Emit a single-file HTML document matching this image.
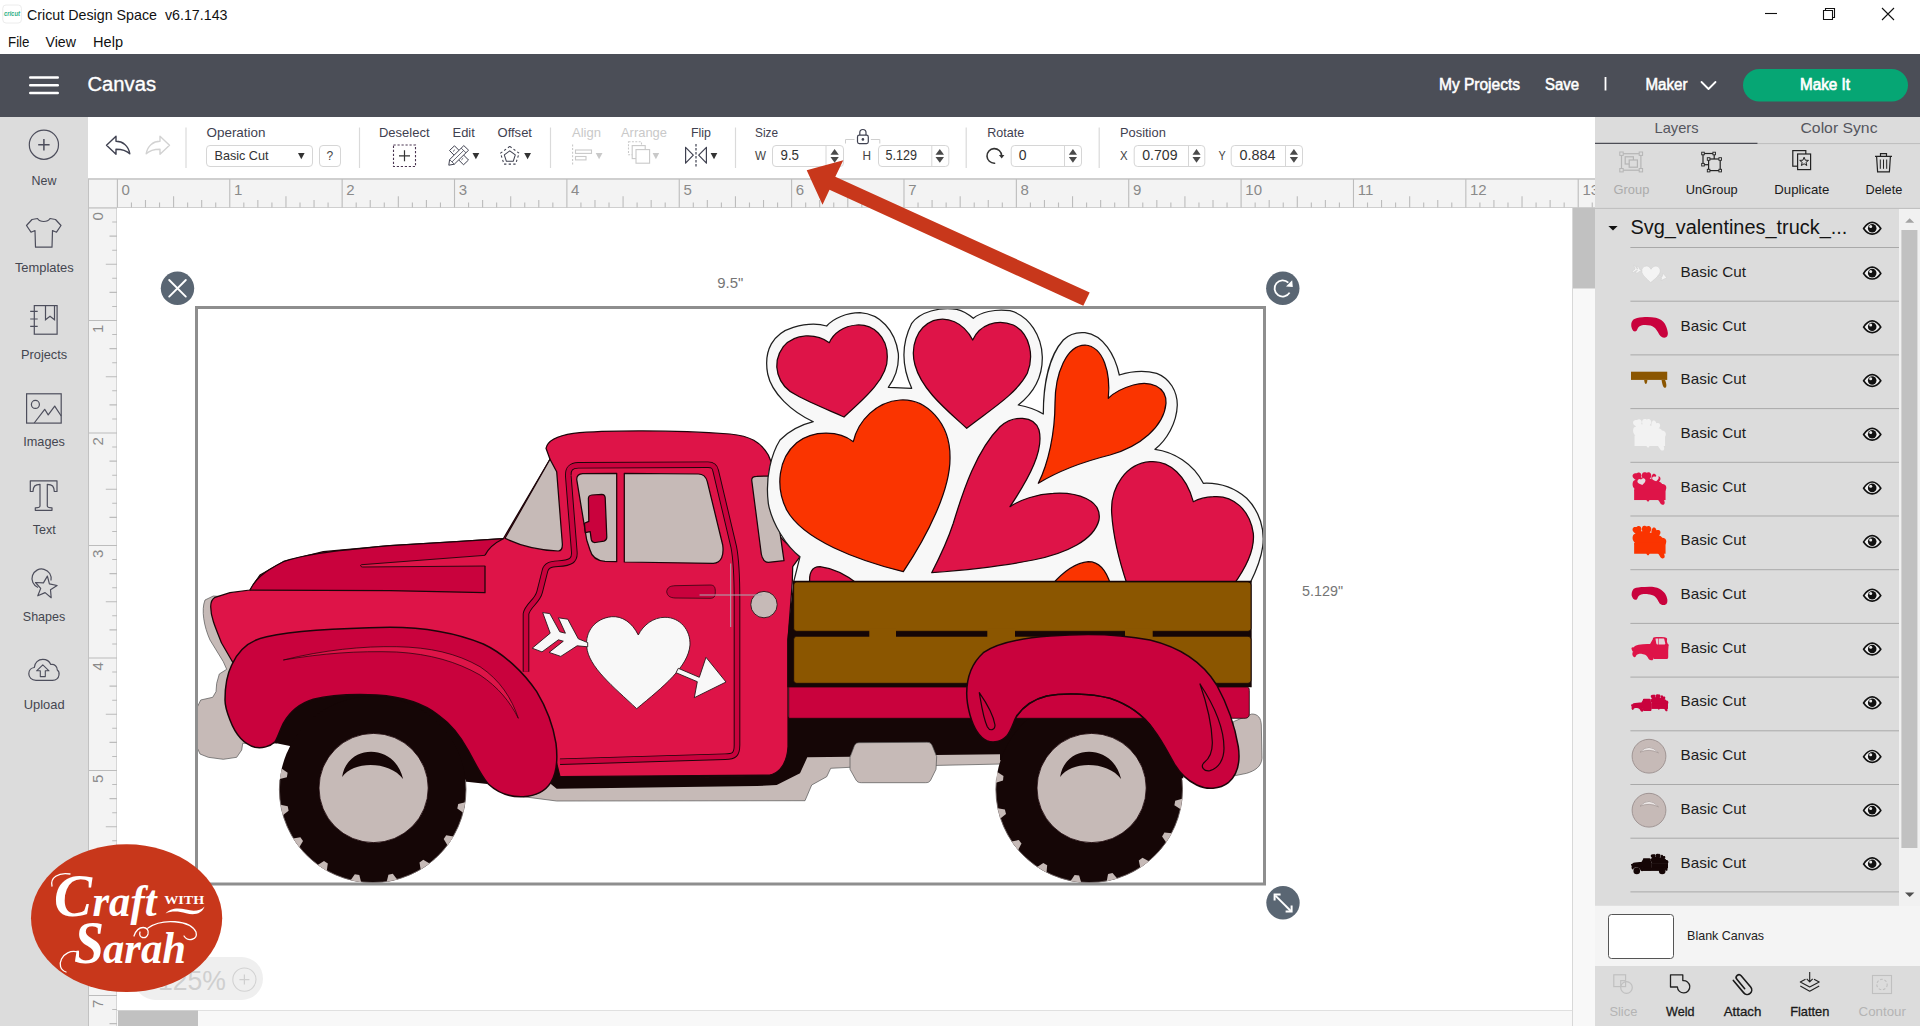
<!DOCTYPE html>
<html>
<head>
<meta charset="utf-8">
<title>Cricut Design Space</title>
<style>
*{box-sizing:border-box;margin:0;padding:0}
html,body{width:1920px;height:1026px;overflow:hidden;background:#fff;font-family:"Liberation Sans",sans-serif;color:#333}
.abs{position:absolute}
#titlebar{left:0;top:0;width:1920px;height:28px;background:#fff}
#menubar{left:0;top:28px;width:1920px;height:26px;background:#fff}
#header{left:0;top:54px;width:1920px;height:63px;background:#4b4e57}
#sidebar{left:0;top:117px;width:88px;height:909px;background:#dcdcdc}
#toolbar{left:88px;top:117px;width:1507px;height:61px;background:#fff}
#rulerTop{left:88px;top:178px;width:1507px;height:30px;background:#f3f3f3;border-top:2px solid #cfcfcf;border-bottom:1px solid #cfcfcf}
#rulerLeft{left:88px;top:208px;width:29px;height:818px;background:#f3f3f3;border-right:1px solid #d6d6d6}
#canvas{left:117px;top:208px;width:1455px;height:802px;background:#fff}
#vscroll{left:1572px;top:208px;width:23px;height:818px;background:#f8f8f8;border-left:1px solid #d8d8d8}
#hscroll{left:117px;top:1010px;width:1455px;height:16px;background:#f8f8f8;border-top:1px solid #e0e0e0}
#rpanel{left:1595px;top:117px;width:325px;height:909px;background:#dcdcdc}
.t{position:absolute;white-space:nowrap;line-height:1}
</style>
</head>
<body>
<div id="titlebar" class="abs"></div>
<div id="menubar" class="abs"></div>
<div id="header" class="abs"></div>
<div id="sidebar" class="abs"></div>
<div id="toolbar" class="abs"></div>
<div id="rulerTop" class="abs"></div>
<div id="rulerLeft" class="abs"></div>
<div id="canvas" class="abs"></div>
<div id="vscroll" class="abs"></div>
<div id="hscroll" class="abs"></div>
<div id="rpanel" class="abs"></div>
<svg class="abs" style="left:0;top:0;font-family:'Liberation Sans',sans-serif" width="1920" height="1026" viewBox="0 0 1920 1026">
<rect x="2.8" y="5" width="18.6" height="18" rx="3.2" fill="#fff" stroke="#ececec" stroke-width="1"/>
<text x="3.9" y="15.8" font-size="6.3" fill="#2fb086" font-weight="bold" text-anchor="start" textLength="16.1" lengthAdjust="spacingAndGlyphs" font-style="italic">cricut</text>
<text x="27.0" y="20.0" font-size="15" fill="#111" font-weight="normal" text-anchor="start" textLength="200.5" lengthAdjust="spacingAndGlyphs" >Cricut Design Space&#160;&#160;v6.17.143</text>
<path d="M1765,13.5 H1777" stroke="#111" stroke-width="1.1"/>
<path d="M1823.5,10.5 h9 v9 h-9 Z M1825.5,10.5 v-2 h9 v9 h-2" fill="none" stroke="#111" stroke-width="1.1"/>
<path d="M1882,8 L1894,20 M1894,8 L1882,20" stroke="#111" stroke-width="1.1"/>
<text x="8.0" y="47.0" font-size="15" fill="#111" font-weight="normal" text-anchor="start" textLength="21.5" lengthAdjust="spacingAndGlyphs" >File</text>
<text x="45.5" y="47.0" font-size="15" fill="#111" font-weight="normal" text-anchor="start" textLength="30.5" lengthAdjust="spacingAndGlyphs" >View</text>
<text x="93.0" y="47.0" font-size="15" fill="#111" font-weight="normal" text-anchor="start" textLength="30.0" lengthAdjust="spacingAndGlyphs" >Help</text>
</svg>
<svg class="abs" style="left:0;top:0;font-family:'Liberation Sans',sans-serif" width="1920" height="1026" viewBox="0 0 1920 1026">
<rect x="29" y="76.3" width="30" height="2.4" rx="1.2" fill="#fff"/>
<rect x="29" y="84.1" width="30" height="2.4" rx="1.2" fill="#fff"/>
<rect x="29" y="91.8" width="30" height="2.4" rx="1.2" fill="#fff"/>
<text x="87.5" y="90.8" font-size="20" fill="#fff" font-weight="normal" text-anchor="start" textLength="68.5" lengthAdjust="spacingAndGlyphs" stroke="#fff" stroke-width="0.35">Canvas</text>
<text x="1439.0" y="89.5" font-size="16" fill="#fff" font-weight="normal" text-anchor="start" textLength="81.0" lengthAdjust="spacingAndGlyphs" stroke="#fff" stroke-width="0.55">My Projects</text>
<text x="1545.0" y="89.5" font-size="16" fill="#fff" font-weight="normal" text-anchor="start" textLength="34.0" lengthAdjust="spacingAndGlyphs" stroke="#fff" stroke-width="0.55">Save</text>
<rect x="1604.6" y="77" width="1.8" height="13.5" fill="#fff"/>
<text x="1645.5" y="89.5" font-size="16" fill="#fff" font-weight="normal" text-anchor="start" textLength="42.0" lengthAdjust="spacingAndGlyphs" stroke="#fff" stroke-width="0.55">Maker</text>
<path d="M1701.5,82 L1708.5,89 L1715.5,82" fill="none" stroke="#fff" stroke-width="1.8" stroke-linecap="round" stroke-linejoin="round"/>
<rect x="1743" y="69" width="165" height="32.5" rx="16.25" fill="#06a674"/>
<text x="1800.0" y="89.5" font-size="16" fill="#fff" font-weight="normal" text-anchor="start" textLength="50.0" lengthAdjust="spacingAndGlyphs" stroke="#fff" stroke-width="0.7">Make It</text>
</svg>
<svg class="abs" style="left:0;top:0;font-family:'Liberation Sans',sans-serif" width="1920" height="1026" viewBox="0 0 1920 1026">
<circle cx="43.9" cy="144.7" r="14.6" fill="none" stroke="#4d4e5c" stroke-width="1.2"/>
<path d="M38.2,144.7 H49.6 M43.9,139 V150.4" stroke="#4d4e5c" stroke-width="1.5"/>
<text x="31.6" y="184.5" font-size="13" fill="#444650" font-weight="normal" text-anchor="start" textLength="24.9" lengthAdjust="spacingAndGlyphs" >New</text>
<path d="M37.5,218.5 C40,222.5 47.5,222.5 50,218.5 L55.5,219.5 L61,225.5 L56.5,232.2 L52.5,230.5 L52,247.2 L35.5,247.2 L35,230.5 L31,232.2 L26.5,225.5 L32,219.5 Z" fill="none" stroke="#4d4e5c" stroke-width="1.2" stroke-linejoin="round"/>
<text x="14.9" y="271.9" font-size="13" fill="#444650" font-weight="normal" text-anchor="start" textLength="58.8" lengthAdjust="spacingAndGlyphs" >Templates</text>
<rect x="34.3" y="305.6" width="22.8" height="28.6" fill="none" stroke="#4d4e5c" stroke-width="1.2"/>
<path d="M30.2,311.4 H37.7 M30.2,319 H37.7 M30.2,326.4 H37.7" stroke="#4d4e5c" stroke-width="1.2"/>
<path d="M45.5,305.6 V319.8 L50,316.3 L54.5,319.8 V305.6" fill="none" stroke="#4d4e5c" stroke-width="1.2"/>
<text x="21.0" y="359.3" font-size="13" fill="#444650" font-weight="normal" text-anchor="start" textLength="46.2" lengthAdjust="spacingAndGlyphs" >Projects</text>
<rect x="26.6" y="393.8" width="34.6" height="29.3" fill="none" stroke="#4d4e5c" stroke-width="1.2"/>
<circle cx="35.4" cy="404.4" r="4" fill="none" stroke="#4d4e5c" stroke-width="1.2"/>
<path d="M34.2,423 L44.7,409.3 L48.2,414.9 L54.7,406.1 L61.2,416" fill="none" stroke="#4d4e5c" stroke-width="1.2" stroke-linejoin="round"/>
<text x="23.2" y="446.1" font-size="13" fill="#444650" font-weight="normal" text-anchor="start" textLength="41.7" lengthAdjust="spacingAndGlyphs" >Images</text>
<path d="M30.3,480.8 H57 V491.5 H54.3 C54,486.5 52.5,484.3 47.3,484.3 V506 C47.3,507.3 48,507.8 52,507.8 V510.3 H35.3 V507.8 C39.3,507.8 40,507.3 40,506 V484.3 C34.8,484.3 33.3,486.5 33,491.5 H30.3 Z" fill="none" stroke="#4d4e5c" stroke-width="1.2" stroke-linejoin="round"/>
<text x="32.8" y="534.3" font-size="13" fill="#444650" font-weight="normal" text-anchor="start" textLength="23.0" lengthAdjust="spacingAndGlyphs" >Text</text>
<path d="M38,587.5 A9.6,9.6 0 1 1 51,580.5" fill="none" stroke="#4d4e5c" stroke-width="1.2"/>
<polygon points="47.4,576.1 49.4,583.8 57.1,585.5 50.5,589.8 51.2,597.7 45.1,592.6 37.8,595.8 40.7,588.4 35.5,582.5 43.4,582.9" fill="#dcdcdc" stroke="#4d4e5c" stroke-width="1.2" stroke-linejoin="round"/>
<text x="22.8" y="621.0" font-size="13" fill="#444650" font-weight="normal" text-anchor="start" textLength="42.5" lengthAdjust="spacingAndGlyphs" >Shapes</text>
<path d="M36,680.3 C31.5,680.3 28.8,677.3 28.8,673.8 C28.8,670.3 31.3,667.8 34.3,667.5 C34.6,662.8 38.3,659.4 42.8,659.4 C46.5,659.4 49.5,661.5 50.8,664.5 C54.5,663.8 57.5,666.5 57.3,670 C59,671 59.3,673 59,675 C58.5,678.3 56,680.3 52.5,680.3 Z" fill="none" stroke="#4d4e5c" stroke-width="1.2" stroke-linejoin="round"/>
<path d="M42.8,664.8 L49,670.8 H45.3 V676.6 H40.3 V670.8 H36.6 Z" fill="none" stroke="#4d4e5c" stroke-width="1.1" stroke-linejoin="round"/>
<text x="23.7" y="709.3" font-size="13" fill="#444650" font-weight="normal" text-anchor="start" textLength="40.9" lengthAdjust="spacingAndGlyphs" >Upload</text>
</svg>
<svg class="abs" style="left:0;top:0;font-family:'Liberation Sans',sans-serif" width="1920" height="1026" viewBox="0 0 1920 1026">
<path d="M106.5,145.3 L116,136.3 V141.3 C122.5,141.3 128.5,145.5 129.8,153.8 C126,150 122,149.2 116,149.2 V154.3 Z" fill="none" stroke="#3f4150" stroke-width="1.4" stroke-linejoin="round"/>
<path d="M169.5,145.3 L160,136.3 V141.3 C153.5,141.3 147.5,145.5 146.2,153.8 C150,150 154,149.2 160,149.2 V154.3 Z" fill="none" stroke="#d2d2d2" stroke-width="1.4" stroke-linejoin="round"/>
<path d="M186.0,127.5 V168" stroke="#dadada" stroke-width="1.2"/>
<text x="206.5" y="137.0" font-size="13" fill="#3f4150" font-weight="normal" text-anchor="start" textLength="59.0" lengthAdjust="spacingAndGlyphs" >Operation</text>
<rect x="206.5" y="145.5" width="106.0" height="21.0" rx="3.5" fill="#fff" stroke="#d6d6d6" stroke-width="1"/>
<text x="214.5" y="160.0" font-size="13" fill="#333" font-weight="normal" text-anchor="start" textLength="54.0" lengthAdjust="spacingAndGlyphs" >Basic Cut</text>
<path d="M298.0,153.0 H304.6 L301.3,159.2 Z" fill="#333"/>
<rect x="319.5" y="145.5" width="21.0" height="21.0" rx="3.5" fill="#fff" stroke="#d6d6d6" stroke-width="1"/>
<text x="329.9" y="160.0" font-size="12" fill="#444" font-weight="normal" text-anchor="middle" >?</text>
<path d="M359.5,127.5 V168" stroke="#dadada" stroke-width="1.2"/>
<text x="379.0" y="137.0" font-size="13" fill="#3f4150" font-weight="normal" text-anchor="start" textLength="50.5" lengthAdjust="spacingAndGlyphs" >Deselect</text>
<rect x="393.5" y="145" width="22" height="21.5" fill="none" stroke="#4a3550" stroke-width="1.1" stroke-dasharray="2.2 1.8"/>
<path d="M399,155.8 H410 M404.5,150.3 V161.3" stroke="#333" stroke-width="1.2"/>
<text x="452.5" y="137.0" font-size="13" fill="#3f4150" font-weight="normal" text-anchor="start" textLength="22.3" lengthAdjust="spacingAndGlyphs" >Edit</text>
<g fill="#fff" stroke="#3f4150" stroke-width="1.0" stroke-linejoin="round"><path d="M449.5,150.5 L454.5,145.8 L468.5,160 L463.5,164.8 Z"/><path d="M453,151.5 l1.8,-1.7 M455.8,154.3 l1.8,-1.7 M458.6,157.1 l1.8,-1.7 M461.4,159.9 l1.8,-1.7" fill="none" stroke-width="0.9"/><path d="M463.8,145.6 L468.6,150.2 L454.3,164.2 L448.8,165.2 L449.6,159.6 Z"/><path d="M449.6,159.6 L454.3,164.2 M461.2,148.2 L466,152.8 M452,161.9 L463.6,150.5" fill="none" stroke-width="0.8"/></g>
<path d="M472.5,153.0 H479.3 L475.9,159.2 Z" fill="#333"/>
<text x="497.5" y="137.0" font-size="13" fill="#3f4150" font-weight="normal" text-anchor="start" textLength="34.5" lengthAdjust="spacingAndGlyphs" >Offset</text>
<polygon points="509.8,150.8 515.3,154.8 513.2,161.3 506.4,161.3 504.3,154.8" fill="none" stroke="#3f4150" stroke-width="1.05" stroke-linejoin="round"/>
<polygon points="509.8,146.4 519.1,153.2 515.6,164.1 504.0,164.1 500.5,153.2" fill="none" stroke="#3f4150" stroke-width="1.05" stroke-dasharray="2.3 2.3" stroke-linejoin="round"/>
<path d="M524.2,153.0 H531.0 L527.6,159.2 Z" fill="#333"/>
<path d="M550.5,127.5 V168" stroke="#dadada" stroke-width="1.2"/>
<text x="572.0" y="137.0" font-size="13" fill="#c9c9c9" font-weight="normal" text-anchor="start" textLength="29.0" lengthAdjust="spacingAndGlyphs" >Align</text>
<path d="M572.6,144.5 V166" stroke="#c9c9c9" stroke-width="1.1" stroke-dasharray="2 1.6"/>
<rect x="575.5" y="150" width="16" height="3.4" fill="none" stroke="#c9c9c9" stroke-width="1.1"/><rect x="575.5" y="156.5" width="10.5" height="3.4" fill="none" stroke="#c9c9c9" stroke-width="1.1"/>
<path d="M595.7,153.0 H602.5 L599.1,159.2 Z" fill="#c9c9c9"/>
<text x="621.0" y="137.0" font-size="13" fill="#c9c9c9" font-weight="normal" text-anchor="start" textLength="46.0" lengthAdjust="spacingAndGlyphs" >Arrange</text>
<rect x="628.5" y="141.8" width="13" height="13" fill="#fff" stroke="#c9c9c9" stroke-width="1.1" stroke-dasharray="2 1.4"/>
<rect x="632.2" y="145.6" width="13" height="13" fill="#fff" stroke="#c9c9c9" stroke-width="1.1"/>
<rect x="636" y="149.6" width="13.6" height="13.6" fill="#fff" stroke="#c9c9c9" stroke-width="1.1"/>
<path d="M652.6,153.0 H659.2 L655.9,159.2 Z" fill="#c9c9c9"/>
<text x="691.0" y="137.0" font-size="13" fill="#3f4150" font-weight="normal" text-anchor="start" textLength="20.0" lengthAdjust="spacingAndGlyphs" >Flip</text>
<path d="M685.6,147.3 V163.2 L693.3,155.2 Z M706.4,147.3 V163.2 L698.7,155.2 Z" fill="none" stroke="#3f4150" stroke-width="1.2" stroke-linejoin="round"/>
<path d="M696,144 V166.5" stroke="#3f4150" stroke-width="1.2" stroke-dasharray="2.4 1.6"/>
<path d="M710.6,153.0 H717.3 L714.0,159.2 Z" fill="#333"/>
<path d="M735.5,127.5 V168" stroke="#dadada" stroke-width="1.2"/>
<text x="755.0" y="137.0" font-size="13" fill="#3f4150" font-weight="normal" text-anchor="start" textLength="23.0" lengthAdjust="spacingAndGlyphs" >Size</text>
<text x="755.0" y="160.0" font-size="12" fill="#444" font-weight="normal" text-anchor="start" textLength="11.0" lengthAdjust="spacingAndGlyphs" >W</text>
<rect x="772.5" y="145.5" width="71.0" height="21.0" rx="3.5" fill="#fff" stroke="#d6d6d6" stroke-width="1"/><path d="M826.0,145.5 V166.5" stroke="#d6d6d6" stroke-width="1"/>
<text x="780.5" y="160.0" font-size="14" fill="#333" font-weight="normal" text-anchor="start" textLength="18.5" lengthAdjust="spacingAndGlyphs" >9.5</text>
<path d="M830.5,154.7 H838.8 L834.6,149.0 Z" fill="#4a4a4a"/><path d="M830.5,157.0 H838.8 L834.6,162.8 Z" fill="#4a4a4a"/>
<path d="M845.5,143.5 V139.5 H854.5 M870.8,139.5 H879.8 V143.5" fill="none" stroke="#cfcfcf" stroke-width="1"/>
<rect x="857.5" y="135.2" width="10.8" height="8.4" rx="1.8" fill="#fff" stroke="#3f4150" stroke-width="1.2"/>
<path d="M859.8,135 V132.6 A3.1,3.1 0 0 1 866,132.6 V135" fill="none" stroke="#3f4150" stroke-width="1.2"/>
<circle cx="862.9" cy="139.4" r="1.3" fill="#3f4150"/>
<text x="862.5" y="160.0" font-size="12" fill="#444" font-weight="normal" text-anchor="start" textLength="8.5" lengthAdjust="spacingAndGlyphs" >H</text>
<rect x="878.5" y="145.5" width="70.3" height="21.0" rx="3.5" fill="#fff" stroke="#d6d6d6" stroke-width="1"/><path d="M931.8,145.5 V166.5" stroke="#d6d6d6" stroke-width="1"/>
<text x="885.5" y="160.0" font-size="14" fill="#333" font-weight="normal" text-anchor="start" textLength="31.5" lengthAdjust="spacingAndGlyphs" >5.129</text>
<path d="M935.5,154.7 H944.0 L939.8,149.0 Z" fill="#4a4a4a"/><path d="M935.5,157.0 H944.0 L939.8,162.8 Z" fill="#4a4a4a"/>
<path d="M966.2,127.5 V168" stroke="#dadada" stroke-width="1.2"/>
<text x="987.2" y="137.0" font-size="13" fill="#3f4150" font-weight="normal" text-anchor="start" textLength="37.0" lengthAdjust="spacingAndGlyphs" >Rotate</text>
<path d="M994.6,163.2 A7.3,7.3 0 1 1 1001.6,155.6" fill="none" stroke="#333" stroke-width="1.6" stroke-linecap="round"/>
<polygon points="998.9,155 1004.4,155 1001.7,158.6" fill="#333"/>
<rect x="1011.2" y="145.5" width="70.3" height="21.0" rx="3.5" fill="#fff" stroke="#d6d6d6" stroke-width="1"/><path d="M1064.5,145.5 V166.5" stroke="#d6d6d6" stroke-width="1"/>
<text x="1018.7" y="160.0" font-size="14" fill="#333" font-weight="normal" text-anchor="start" >0</text>
<path d="M1068.8,154.7 H1077.0 L1072.9,149.0 Z" fill="#4a4a4a"/><path d="M1068.8,157.0 H1077.0 L1072.9,162.8 Z" fill="#4a4a4a"/>
<path d="M1099.2,127.5 V168" stroke="#dadada" stroke-width="1.2"/>
<text x="1120.0" y="137.0" font-size="13" fill="#3f4150" font-weight="normal" text-anchor="start" textLength="45.8" lengthAdjust="spacingAndGlyphs" >Position</text>
<text x="1120.0" y="160.0" font-size="12" fill="#444" font-weight="normal" text-anchor="start" textLength="7.6" lengthAdjust="spacingAndGlyphs" >X</text>
<rect x="1134.2" y="145.5" width="70.6" height="21.0" rx="3.5" fill="#fff" stroke="#d6d6d6" stroke-width="1"/><path d="M1188.5,145.5 V166.5" stroke="#d6d6d6" stroke-width="1"/>
<text x="1142.2" y="160.0" font-size="14" fill="#333" font-weight="normal" text-anchor="start" textLength="35.3" lengthAdjust="spacingAndGlyphs" >0.709</text>
<path d="M1192.5,154.7 H1200.6 L1196.5,149.0 Z" fill="#4a4a4a"/><path d="M1192.5,157.0 H1200.6 L1196.5,162.8 Z" fill="#4a4a4a"/>
<text x="1218.5" y="160.0" font-size="12" fill="#444" font-weight="normal" text-anchor="start" textLength="7.2" lengthAdjust="spacingAndGlyphs" >Y</text>
<rect x="1231.2" y="145.5" width="71.3" height="21.0" rx="3.5" fill="#fff" stroke="#d6d6d6" stroke-width="1"/><path d="M1285.5,145.5 V166.5" stroke="#d6d6d6" stroke-width="1"/>
<text x="1239.5" y="160.0" font-size="14" fill="#333" font-weight="normal" text-anchor="start" textLength="36.0" lengthAdjust="spacingAndGlyphs" >0.884</text>
<path d="M1289.8,154.7 H1298.0 L1293.9,149.0 Z" fill="#4a4a4a"/><path d="M1289.8,157.0 H1298.0 L1293.9,162.8 Z" fill="#4a4a4a"/>
</svg>
<svg class="abs" style="left:0;top:0;font-family:'Liberation Sans',sans-serif" width="1920" height="1026" viewBox="0 0 1920 1026">
<defs><clipPath id="rt"><rect x="88" y="178" width="1507" height="30"/></clipPath><clipPath id="rl"><rect x="88" y="208" width="29" height="818"/></clipPath></defs><g clip-path="url(#rt)"><path d="M117.40,179.0 V207.5 M131.45,202.5 V207.5 M145.49,200.0 V207.5 M159.54,202.5 V207.5 M173.59,196.3 V207.5 M187.63,202.5 V207.5 M201.68,200.0 V207.5 M215.72,202.5 V207.5 M229.77,179.0 V207.5 M243.82,202.5 V207.5 M257.86,200.0 V207.5 M271.91,202.5 V207.5 M285.96,196.3 V207.5 M300.00,202.5 V207.5 M314.05,200.0 V207.5 M328.09,202.5 V207.5 M342.14,179.0 V207.5 M356.19,202.5 V207.5 M370.23,200.0 V207.5 M384.28,202.5 V207.5 M398.33,196.3 V207.5 M412.37,202.5 V207.5 M426.42,200.0 V207.5 M440.46,202.5 V207.5 M454.51,179.0 V207.5 M468.56,202.5 V207.5 M482.60,200.0 V207.5 M496.65,202.5 V207.5 M510.70,196.3 V207.5 M524.74,202.5 V207.5 M538.79,200.0 V207.5 M552.83,202.5 V207.5 M566.88,179.0 V207.5 M580.93,202.5 V207.5 M594.97,200.0 V207.5 M609.02,202.5 V207.5 M623.07,196.3 V207.5 M637.11,202.5 V207.5 M651.16,200.0 V207.5 M665.20,202.5 V207.5 M679.25,179.0 V207.5 M693.30,202.5 V207.5 M707.34,200.0 V207.5 M721.39,202.5 V207.5 M735.44,196.3 V207.5 M749.48,202.5 V207.5 M763.53,200.0 V207.5 M777.57,202.5 V207.5 M791.62,179.0 V207.5 M805.67,202.5 V207.5 M819.71,200.0 V207.5 M833.76,202.5 V207.5 M847.80,196.3 V207.5 M861.85,202.5 V207.5 M875.90,200.0 V207.5 M889.94,202.5 V207.5 M903.99,179.0 V207.5 M918.04,202.5 V207.5 M932.08,200.0 V207.5 M946.13,202.5 V207.5 M960.18,196.3 V207.5 M974.22,202.5 V207.5 M988.27,200.0 V207.5 M1002.31,202.5 V207.5 M1016.36,179.0 V207.5 M1030.41,202.5 V207.5 M1044.45,200.0 V207.5 M1058.50,202.5 V207.5 M1072.55,196.3 V207.5 M1086.59,202.5 V207.5 M1100.64,200.0 V207.5 M1114.68,202.5 V207.5 M1128.73,179.0 V207.5 M1142.78,202.5 V207.5 M1156.82,200.0 V207.5 M1170.87,202.5 V207.5 M1184.92,196.3 V207.5 M1198.96,202.5 V207.5 M1213.01,200.0 V207.5 M1227.05,202.5 V207.5 M1241.10,179.0 V207.5 M1255.15,202.5 V207.5 M1269.19,200.0 V207.5 M1283.24,202.5 V207.5 M1297.29,196.3 V207.5 M1311.33,202.5 V207.5 M1325.38,200.0 V207.5 M1339.42,202.5 V207.5 M1353.47,179.0 V207.5 M1367.52,202.5 V207.5 M1381.56,200.0 V207.5 M1395.61,202.5 V207.5 M1409.66,196.3 V207.5 M1423.70,202.5 V207.5 M1437.75,200.0 V207.5 M1451.79,202.5 V207.5 M1465.84,179.0 V207.5 M1479.89,202.5 V207.5 M1493.93,200.0 V207.5 M1507.98,202.5 V207.5 M1522.03,196.3 V207.5 M1536.07,202.5 V207.5 M1550.12,200.0 V207.5 M1564.16,202.5 V207.5 M1578.21,179.0 V207.5 M1592.26,202.5 V207.5" stroke="#bcbcbc" stroke-width="1.1" fill="none"/>
<text x="121.6" y="194.9" font-size="15" fill="#8a8a8a" font-weight="normal" text-anchor="start" >0</text>
<text x="234.0" y="194.9" font-size="15" fill="#8a8a8a" font-weight="normal" text-anchor="start" >1</text>
<text x="346.3" y="194.9" font-size="15" fill="#8a8a8a" font-weight="normal" text-anchor="start" >2</text>
<text x="458.7" y="194.9" font-size="15" fill="#8a8a8a" font-weight="normal" text-anchor="start" >3</text>
<text x="571.1" y="194.9" font-size="15" fill="#8a8a8a" font-weight="normal" text-anchor="start" >4</text>
<text x="683.5" y="194.9" font-size="15" fill="#8a8a8a" font-weight="normal" text-anchor="start" >5</text>
<text x="795.8" y="194.9" font-size="15" fill="#8a8a8a" font-weight="normal" text-anchor="start" >6</text>
<text x="908.2" y="194.9" font-size="15" fill="#8a8a8a" font-weight="normal" text-anchor="start" >7</text>
<text x="1020.6" y="194.9" font-size="15" fill="#8a8a8a" font-weight="normal" text-anchor="start" >8</text>
<text x="1132.9" y="194.9" font-size="15" fill="#8a8a8a" font-weight="normal" text-anchor="start" >9</text>
<text x="1245.3" y="194.9" font-size="15" fill="#8a8a8a" font-weight="normal" text-anchor="start" >10</text>
<text x="1357.7" y="194.9" font-size="15" fill="#8a8a8a" font-weight="normal" text-anchor="start" >11</text>
<text x="1470.0" y="194.9" font-size="15" fill="#8a8a8a" font-weight="normal" text-anchor="start" >12</text>
<text x="1582.4" y="194.9" font-size="15" fill="#8a8a8a" font-weight="normal" text-anchor="start" >13</text></g><g clip-path="url(#rl)"><path d="M88.5,208.00 H117 M112.2,222.06 H117 M109.5,236.12 H117 M112.2,250.19 H117 M105.8,264.25 H117 M112.2,278.31 H117 M109.5,292.38 H117 M112.2,306.44 H117 M88.5,320.50 H117 M112.2,334.56 H117 M109.5,348.62 H117 M112.2,362.69 H117 M105.8,376.75 H117 M112.2,390.81 H117 M109.5,404.88 H117 M112.2,418.94 H117 M88.5,433.00 H117 M112.2,447.06 H117 M109.5,461.12 H117 M112.2,475.19 H117 M105.8,489.25 H117 M112.2,503.31 H117 M109.5,517.38 H117 M112.2,531.44 H117 M88.5,545.50 H117 M112.2,559.56 H117 M109.5,573.62 H117 M112.2,587.69 H117 M105.8,601.75 H117 M112.2,615.81 H117 M109.5,629.88 H117 M112.2,643.94 H117 M88.5,658.00 H117 M112.2,672.06 H117 M109.5,686.12 H117 M112.2,700.19 H117 M105.8,714.25 H117 M112.2,728.31 H117 M109.5,742.38 H117 M112.2,756.44 H117 M88.5,770.50 H117 M112.2,784.56 H117 M109.5,798.62 H117 M112.2,812.69 H117 M105.8,826.75 H117 M112.2,840.81 H117 M109.5,854.88 H117 M112.2,868.94 H117 M88.5,883.00 H117 M112.2,897.06 H117 M109.5,911.12 H117 M112.2,925.19 H117 M105.8,939.25 H117 M112.2,953.31 H117 M109.5,967.38 H117 M112.2,981.44 H117 M88.5,995.50 H117 M112.2,1009.56 H117 M109.5,1023.62 H117" stroke="#bcbcbc" stroke-width="1.1" fill="none"/>
<text transform="translate(103.1 220.6) rotate(-90)" font-size="15" fill="#8a8a8a">0</text>
<text transform="translate(103.1 333.1) rotate(-90)" font-size="15" fill="#8a8a8a">1</text>
<text transform="translate(103.1 445.6) rotate(-90)" font-size="15" fill="#8a8a8a">2</text>
<text transform="translate(103.1 558.1) rotate(-90)" font-size="15" fill="#8a8a8a">3</text>
<text transform="translate(103.1 670.6) rotate(-90)" font-size="15" fill="#8a8a8a">4</text>
<text transform="translate(103.1 783.1) rotate(-90)" font-size="15" fill="#8a8a8a">5</text>
<text transform="translate(103.1 895.6) rotate(-90)" font-size="15" fill="#8a8a8a">6</text>
<text transform="translate(103.1 1008.1) rotate(-90)" font-size="15" fill="#8a8a8a">7</text></g><path d="M88.5,179 V1026" stroke="#c2c2c2" stroke-width="1"/>
</svg>
<svg class="abs" style="left:0;top:0" width="1920" height="1026" viewBox="0 0 1920 1026"><defs><clipPath id="cv"><rect x="117" y="208" width="1455" height="802"/></clipPath></defs><g clip-path="url(#cv)">
<path d="M 213.3,596.0 L 205.0,600.0 C 201.0,610.0 204.0,626.7 210.0,640.0 L 223.3,661.7 L 226.7,669.3 L 219.3,674.0 L 216.7,683.3 L 216.0,691.7 L 212.7,697.3 L 200.7,700.0 L 196.7,708.3 L 196.7,746.7 L 200.0,754.0 L 208.3,757.3 L 223.3,759.3 L 236.7,757.3 L 241.7,750.0 L 242.7,743.3 L 276.7,743.3 L 276.7,600.0 Z" fill="#c6bab7" stroke="#555" stroke-width="0.7" stroke-linejoin="round" />
<path d="M 510.0,786.7 L 523.3,796.7 L 556.7,801.0 L 805.0,800.7 L 811.7,785.0 L 826.7,776.7 L 830.7,768.3 L 850.0,767.3 L 1001.7,764.0 L 1001.7,740.0 L 800.0,740.0 L 556.7,780.0 Z" fill="#c6bab7" stroke="#555" stroke-width="0.7" stroke-linejoin="round" />
<path d="M 1233.3,721.7 L 1251.7,714.0 C 1258.3,714.0 1261.0,718.3 1261.3,725.0 L 1262.0,758.3 C 1261.3,766.7 1255.0,770.7 1246.7,773.3 L 1233.3,776.0 Z" fill="#c6bab7" stroke="#555" stroke-width="0.7" stroke-linejoin="round" />
<path d="M 551.7,760.0 L 549.3,782.7 L 556.7,788.7 L 756.7,786.0 L 776.7,785.0 L 800.0,773.3 L 807.3,757.3 L 850.0,756.7 L 856.7,743.3 L 930.0,742.7 L 935.0,755.0 L 1000.0,754.3 L 1000.0,716.7 L 787.3,716.7 L 787.3,746.7 L 766.7,760.0 L 756.7,760.0 Z" fill="#150606" stroke="none" stroke-width="0" stroke-linejoin="round" />
<path d="M 274.0,742.7 L 277.3,733.3 L 290.0,700.0 L 330.0,676.7 L 423.3,676.7 L 463.3,710.0 L 483.3,760.0 L 487.3,784.0 L 466.7,781.7 L 372.7,789.3 L 290.0,746.0 Z" fill="#150606" stroke="none" stroke-width="0" stroke-linejoin="round" />
<path d="M 1000.0,716.7 L 1013.3,686.7 L 1148.3,686.7 L 1173.3,733.3 L 1183.3,770.0 L 1183.3,778.3 L 1089.0,789.3 L 1000.0,760.0 Z" fill="#150606" stroke="none" stroke-width="0" stroke-linejoin="round" />
<circle cx="372.7" cy="789.4" r="93.3" fill="#150606" stroke="none" stroke-width="0"/>
<path d="M465.5,779.6 A93.3,93.3 0 1 1 279.9,779.6" fill="none" stroke="#6b6060" stroke-width="0.9"/>
<polygon points="465.3,802.3 463.2,812.8 457.3,808.5 458.2,804.0" fill="#c6bab7"/>
<polygon points="453.5,836.4 447.6,845.4 443.7,839.1 446.2,835.3" fill="#c6bab7"/>
<polygon points="429.6,863.6 420.7,869.6 419.5,862.4 423.3,859.8" fill="#c6bab7"/>
<polygon points="397.2,879.6 386.7,881.8 388.4,874.7 392.8,873.7" fill="#c6bab7"/>
<polygon points="361.1,882.2 350.6,880.2 354.8,874.2 359.3,875.1" fill="#c6bab7"/>
<polygon points="326.8,870.9 317.7,865.0 324.0,861.1 327.8,863.6" fill="#c6bab7"/>
<polygon points="299.3,847.3 293.1,838.5 300.4,837.3 303.0,841.0" fill="#c6bab7"/>
<polygon points="282.8,815.2 280.5,804.7 287.7,806.2 288.6,810.7" fill="#c6bab7"/>
<polygon points="279.8,779.1 281.6,768.5 287.6,772.7 286.9,777.2" fill="#c6bab7"/>
<circle cx="373.6" cy="788.0" r="54.6" fill="#c6bab7" stroke="#1c0509" stroke-width="0.8"/>
<path d="M342.1,777.0 C346.6,744.0 394.6,742.0 403.1,779.0 C389.6,761.0 353.6,760.5 342.1,777.0 Z" fill="#150606"/>
<circle cx="1089.2" cy="789.4" r="93.3" fill="#150606" stroke="none" stroke-width="0"/>
<path d="M1182.0,779.6 A93.3,93.3 0 1 1 996.4,779.6" fill="none" stroke="#6b6060" stroke-width="0.9"/>
<polygon points="1182.2,798.7 1180.6,809.3 1174.4,805.2 1175.2,800.7" fill="#c6bab7"/>
<polygon points="1171.8,833.3 1166.2,842.5 1162.1,836.4 1164.4,832.5" fill="#c6bab7"/>
<polygon points="1148.9,861.3 1140.3,867.7 1138.8,860.5 1142.5,857.8" fill="#c6bab7"/>
<polygon points="1117.2,878.6 1106.7,881.2 1108.1,874.0 1112.5,872.9" fill="#c6bab7"/>
<polygon points="1081.2,882.6 1070.6,881.0 1074.6,874.9 1079.1,875.5" fill="#c6bab7"/>
<polygon points="1046.5,872.6 1037.2,867.1 1043.3,862.9 1047.2,865.2" fill="#c6bab7"/>
<polygon points="1018.1,850.1 1011.6,841.5 1018.8,840.0 1021.5,843.6" fill="#c6bab7"/>
<polygon points="1000.4,818.6 997.6,808.2 1004.9,809.5 1006.0,813.9" fill="#c6bab7"/>
<polygon points="995.9,782.7 997.3,772.0 1003.5,776.0 1003.0,780.5" fill="#c6bab7"/>
<circle cx="1091.6" cy="788.0" r="54.6" fill="#c6bab7" stroke="#1c0509" stroke-width="0.8"/>
<path d="M1060.1,777.0 C1064.6,744.0 1112.6,742.0 1121.1,779.0 C1107.6,761.0 1071.6,760.5 1060.1,777.0 Z" fill="#150606"/>
<path d="M 850.0,757.3 L 854.0,746.7 C 855.3,743.3 856.7,742.7 860.0,742.7 L 926.7,742.3 C 930.0,742.3 931.3,743.3 932.7,746.7 L 936.7,756.7 L 936.0,769.3 L 930.7,780.0 C 929.3,782.3 928.0,782.7 925.3,782.7 L 861.3,782.7 C 858.7,782.7 857.3,782.0 856.0,780.0 L 850.0,769.3 Z" fill="#c6bab7" stroke="#555" stroke-width="0.7" stroke-linejoin="round" />
<path d="M 215.0,597.3 L 230.0,592.7 L 250.0,590.0 L 260.0,575.0 L 283.3,561.7 L 323.3,551.7 L 390.0,545.7 L 456.7,541.7 L 503.3,538.7 L 550.0,459.3 L 546.0,448.3 C 547.3,441.7 555.0,436.0 573.3,433.3 C 606.7,430.0 673.3,430.0 730.0,434.0 C 750.0,436.0 760.7,441.7 768.3,455.0 L 771.7,463.3 L 768.3,476.7 L 768.3,503.3 L 780.0,536.7 L 800.0,556.7 L 792.7,566.7 L 792.3,581.7 L 788.0,640.0 L 788.0,746.7 C 787.3,760.0 781.7,773.3 768.3,775.3 L 700.0,777.3 L 770.0,775.0 L 560.0,776.7 L 556.7,763.3 L 523.3,700.0 L 390.0,666.7 L 256.7,658.3 L 233.3,663.3 L 221.7,643.3 C 215.0,626.7 210.7,616.7 210.7,606.7 C 210.7,601.7 212.7,598.7 215.0,597.3 Z" fill="#de1448" stroke="#1c0509" stroke-width="1.25" stroke-linejoin="round" />
<path d="M 250.0,590.0 C 255.0,580.0 261.7,572.7 283.3,561.7 C 303.3,555.0 323.3,551.7 390.0,545.7 L 456.7,541.7 L 503.3,538.7 C 495.0,542.7 488.3,548.3 485.0,555.3 L 485.0,592.7 L 390.0,590.7 Z" fill="#c9023d" stroke="#1c0509" stroke-width="1.25" stroke-linejoin="round" />
<path d="M 361.7,564.7 L 486.7,555.0 L 486.7,566.0 L 362.7,567.0 C 360.0,566.7 360.0,565.0 361.7,564.7 Z" fill="#de1448" stroke="none" stroke-width="0" stroke-linejoin="round" />
<path d="M 485.3,555.3 L 361.7,564.7 C 360.0,565.0 360.0,566.7 362.7,567.0 L 485.3,566.0" fill="none" stroke="#1c0509" stroke-width="0.9" stroke-linejoin="round" />
<path d="M 550.0,459.3 L 505.0,538.3 C 516.7,544.0 533.3,550.0 558.3,551.0 C 561.7,550.7 562.7,548.3 562.3,543.3 L 556.7,471.7 Z" fill="#c6bab7" stroke="#1c0509" stroke-width="1.25" stroke-linejoin="round" />
<path d="M 576.7,479.3 C 576.7,476.0 578.7,474.0 582.7,473.7 L 616.7,473.3 L 616.7,561.7 L 605.0,561.3 C 596.7,560.7 591.7,556.7 590.0,550.0 L 586.7,540.0 Z" fill="#c6bab7" stroke="#1c0509" stroke-width="1.25" stroke-linejoin="round" />
<path d="M 624.3,473.3 L 698.3,474.0 C 703.3,474.0 706.0,476.7 707.3,481.7 L 722.7,545.0 C 724.0,555.0 721.7,562.7 713.3,563.3 L 624.3,562.0 Z" fill="#c6bab7" stroke="#1c0509" stroke-width="1.25" stroke-linejoin="round" />
<path d="M 751.7,480.0 C 751.7,477.3 753.3,476.3 756.7,476.3 L 770.0,476.0 L 776.7,510.0 L 784.0,560.7 L 768.3,562.3 C 764.0,562.3 762.3,559.3 761.3,554.0 Z" fill="#c6bab7" stroke="#1c0509" stroke-width="1.25" stroke-linejoin="round" />
<path d="M 588.4,498.5 C 588.4,496.1 589.5,495.2 591.9,495.0 L 601.7,494.3 C 604.0,494.3 605.0,495.4 605.2,497.8 L 606.8,537.1 C 606.8,539.4 605.9,540.6 604.0,541.1 L 595.4,542.5 C 593.0,542.7 591.6,541.5 591.2,539.2 L 590.2,531.7 L 585.3,532.6 L 584.4,523.3 L 588.8,521.4 Z" fill="#c9023d" stroke="#1c0509" stroke-width="1.25" stroke-linejoin="round" />
<path d="M 526.0,671.7 L 526.0,614.0 C 527.7,605.0 537.3,601.7 539.7,591.7 L 545.0,570.7 C 546.3,565.3 550.0,564.3 558.0,563.7 C 571.0,563.0 575.0,560.3 574.3,552.0 L 568.3,476.0 C 568.0,468.3 570.7,465.7 578.3,465.3 L 708.0,464.7 C 713.0,464.7 714.7,466.3 715.7,470.7 L 733.7,546.7 C 736.3,560.0 737.0,573.3 737.0,600.0 L 737.0,745.0 C 737.0,754.3 734.3,756.7 725.0,756.7 L 560.0,761.7" fill="none" stroke="#1c0509" stroke-width="6.6" stroke-linejoin="round"/>
<path d="M 526.0,671.7 L 526.0,614.0 C 527.7,605.0 537.3,601.7 539.7,591.7 L 545.0,570.7 C 546.3,565.3 550.0,564.3 558.0,563.7 C 571.0,563.0 575.0,560.3 574.3,552.0 L 568.3,476.0 C 568.0,468.3 570.7,465.7 578.3,465.3 L 708.0,464.7 C 713.0,464.7 714.7,466.3 715.7,470.7 L 733.7,546.7 C 736.3,560.0 737.0,573.3 737.0,600.0 L 737.0,745.0 C 737.0,754.3 734.3,756.7 725.0,756.7 L 560.0,761.7" fill="none" stroke="#c9023d" stroke-width="4.7" stroke-linejoin="round"/>
<path d="M 666.7,591.7 C 667.3,587.3 670.0,586.0 675.0,585.7 L 710.0,585.0 C 714.0,585.0 715.3,586.7 715.3,591.7 C 715.3,596.7 714.0,598.3 710.0,598.3 L 675.0,598.0 C 670.0,597.7 667.3,596.0 666.7,591.7 Z" fill="#c9023d" stroke="#1c0509" stroke-width="0.7" stroke-linejoin="round" />
<circle cx="764.0" cy="604.6" r="13.2" fill="#c6bab7" stroke="#1c0509" stroke-width="0.8"/>
<path d="M 638.3,635.0 C 631.7,621.7 621.7,616.0 611.7,616.7 C 595.0,618.3 585.0,631.7 586.7,646.7 C 588.3,666.7 613.3,686.7 636.7,708.7 C 663.3,686.7 688.3,666.7 690.0,645.0 C 690.7,630.0 680.0,617.3 665.0,617.3 C 653.3,617.3 643.3,625.0 638.3,635.0 Z" fill="#f8f8f8" stroke="#2a161b" stroke-width="0.9" stroke-linejoin="round" />
<path d="M 678.3,668.3 L 699.3,677.3 L 706.0,657.3 L 726.0,682.0 L 694.3,697.7 L 697.3,681.7 L 676.0,672.7 Z" fill="#f8f8f8" stroke="#2a161b" stroke-width="0.9" stroke-linejoin="round" />
<path d="M 542.7,612.6 L 549.8,613.6 L 559.8,631.8 L 565.4,633.2 L 558.4,617.8 L 567.8,619.2 L 578.3,638.8 L 587.7,642.6 L 587.7,646.8 L 577.1,645.8 L 560.8,656.4 L 549.1,652.4 L 563.3,641.2 L 558.4,639.8 L 542.0,651.9 L 532.2,648.2 L 550.2,633.2 Z" fill="#f8f8f8" stroke="#2a161b" stroke-width="0.9" stroke-linejoin="round" />
<path d="M 793.3,583.3 L 800.0,556.7 C 786.7,546.7 771.7,523.3 768.3,503.3 C 765.0,476.7 771.7,453.3 780.0,440.0 C 790.0,430.0 800.0,425.0 813.3,421.7 C 791.7,411.7 771.7,393.3 767.7,374.0 C 763.3,350.0 773.3,333.3 793.3,327.3 C 806.7,323.3 818.3,323.3 826.7,326.0 C 833.3,318.3 846.7,312.7 860.0,312.7 C 880.0,314.0 895.0,330.0 898.3,353.3 C 899.3,366.7 895.0,378.3 888.3,387.3 L 911.7,388.3 C 903.3,370.0 900.0,346.7 911.7,323.3 C 920.0,311.7 940.0,306.7 956.7,309.3 C 963.3,310.7 968.3,314.0 973.3,318.3 C 980.0,312.7 995.0,308.3 1010.0,310.7 C 1030.0,316.0 1041.7,336.7 1042.3,356.7 C 1042.7,376.7 1033.3,393.3 1018.3,405.0 C 1028.3,406.7 1036.7,410.0 1043.3,414.0 C 1043.3,386.7 1048.3,356.7 1063.3,340.0 C 1070.0,333.3 1076.7,332.0 1085.0,332.7 C 1103.3,335.0 1115.0,355.0 1119.3,375.0 C 1130.0,371.7 1143.3,370.0 1156.7,373.3 C 1170.0,378.3 1177.3,391.7 1177.3,405.0 C 1176.7,423.3 1166.7,440.0 1155.0,449.3 C 1173.3,451.7 1193.3,463.3 1203.3,483.3 C 1216.7,482.7 1233.3,486.7 1246.7,498.3 C 1260.0,511.7 1265.0,530.0 1262.7,546.7 C 1260.7,561.7 1255.0,573.3 1250.0,583.3 Z" fill="#f8f8f8" stroke="#1e1e1e" stroke-width="1.25" stroke-linejoin="round" />
<path d="M 829.3,342.7 C 816.7,333.3 795.0,332.7 783.3,346.7 C 770.7,364.0 777.3,386.0 796.7,395.3 C 810.0,402.7 830.0,410.7 844.0,417.0 C 866.7,396.7 888.3,377.3 887.3,356.7 C 887.3,336.7 873.3,324.0 856.7,325.0 C 843.3,326.0 833.3,333.3 829.3,342.7 Z" fill="#de1448" stroke="#1c0509" stroke-width="1.25" stroke-linejoin="round" />
<path d="M 972.7,340.0 C 963.3,321.7 946.7,316.0 933.3,320.7 C 916.7,327.3 910.0,346.7 915.0,365.0 C 921.7,390.0 946.7,410.0 966.7,428.3 C 990.0,410.0 1016.7,394.0 1027.3,373.3 C 1034.0,356.7 1030.7,334.0 1013.3,325.0 C 996.7,318.3 979.3,325.0 972.7,340.0 Z" fill="#de1448" stroke="#1c0509" stroke-width="1.25" stroke-linejoin="round" />
<path d="M 1108.3,398.3 C 1110.7,373.3 1104.0,346.7 1085.0,345.0 C 1066.7,345.0 1055.0,373.3 1055.0,403.3 C 1055.0,433.3 1048.3,463.3 1038.3,483.3 C 1060.0,470.0 1083.3,461.7 1110.0,455.0 C 1140.0,446.7 1164.0,426.7 1166.0,403.3 C 1166.7,386.7 1150.0,380.0 1133.3,385.0 C 1121.7,388.3 1113.3,393.3 1108.3,398.3 Z" fill="#fa3400" stroke="#1c0509" stroke-width="1.25" stroke-linejoin="round" />
<path d="M 853.3,441.7 C 840.0,430.7 813.3,429.3 796.7,442.7 C 778.3,458.3 775.0,486.7 786.7,510.0 C 803.3,540.0 856.7,560.0 903.3,571.7 C 926.7,536.7 950.7,490.0 950.0,456.7 C 950.0,423.3 926.7,398.3 900.0,400.0 C 876.7,401.7 858.3,420.0 853.3,441.7 Z" fill="#fa3400" stroke="#1c0509" stroke-width="1.25" stroke-linejoin="round" />
<path d="M 1010.0,506.7 C 1030.0,476.7 1044.0,450.0 1039.0,430.0 C 1034.0,415.0 1013.3,415.0 1000.0,426.7 C 976.7,450.0 963.3,490.0 953.3,523.3 C 946.7,543.3 938.3,560.0 931.7,572.7 C 966.7,570.0 1000.0,566.7 1033.3,560.0 C 1066.7,553.3 1094.0,540.0 1099.0,520.0 C 1102.3,500.0 1076.7,491.7 1053.3,493.3 C 1036.7,494.0 1020.0,500.0 1010.0,506.7 Z" fill="#de1448" stroke="#1c0509" stroke-width="1.25" stroke-linejoin="round" />
<path d="M 1193.3,501.7 C 1186.7,476.7 1170.0,460.0 1150.0,461.7 C 1126.7,463.3 1110.0,486.7 1111.7,513.3 C 1113.3,540.0 1120.0,563.3 1127.3,585.0 L 1233.3,585.0 C 1246.7,566.7 1255.0,550.0 1253.3,533.3 C 1250.0,510.0 1233.3,495.0 1213.3,496.7 C 1203.3,497.3 1196.7,500.0 1193.3,501.7 Z" fill="#de1448" stroke="#1c0509" stroke-width="1.25" stroke-linejoin="round" />
<path d="M 1051.7,585.0 C 1063.3,571.7 1076.7,562.7 1088.3,561.7 C 1100.0,561.7 1106.7,571.7 1110.7,585.0 Z" fill="#fa3400" stroke="#1c0509" stroke-width="1.25" stroke-linejoin="round" />
<path d="M 810.0,585.0 C 808.3,573.3 811.7,566.7 820.0,566.7 C 833.3,568.3 846.7,575.0 859.3,585.0 Z" fill="#de1448" stroke="#1c0509" stroke-width="1.25" stroke-linejoin="round" />
<path d="M 793.3,580.7 L 1251.7,580.7 L 1251.7,687.3 L 787.3,687.3 L 787.3,640.0 Z" fill="#150606" stroke="none" stroke-width="0" stroke-linejoin="round" />
<rect x="793.7" y="582.0" width="457.3" height="49.3" rx="3.0" fill="#8b5600" stroke="#150606" stroke-width="0.8"/>
<rect x="793.7" y="636.3" width="457.3" height="47.0" rx="3.0" fill="#8b5600" stroke="#150606" stroke-width="0.8"/>
<rect x="869.3" y="628.3" width="26.7" height="10.0" fill="#8b5600"/>
<rect x="987.3" y="628.3" width="27.7" height="10.0" fill="#8b5600"/>
<rect x="1125.0" y="628.3" width="27.7" height="10.0" fill="#8b5600"/>
<path d="M 788.7,687.0 L 1246.7,687.0 C 1248.7,687.0 1249.3,688.3 1249.3,690.7 L 1249.3,714.0 C 1249.3,716.7 1248.0,718.0 1245.3,718.3 L 788.7,718.3 Z" fill="#c9023d" stroke="#1c0509" stroke-width="0.8" stroke-linejoin="round" />
<path d="M 225.0,700.0 C 225.0,686.7 226.7,675.0 231.7,665.0 C 238.3,650.0 250.0,640.0 266.7,636.7 C 290.0,631.7 330.0,628.3 390.0,627.3 C 423.3,627.3 456.7,633.3 483.3,644.0 C 503.3,653.3 523.3,671.7 536.7,691.7 C 546.7,708.3 553.3,726.7 556.0,743.3 C 558.0,760.0 556.7,773.3 550.7,782.7 C 545.0,791.7 536.7,796.0 523.3,796.7 C 510.0,797.3 498.3,793.3 488.3,784.0 C 481.7,776.7 476.7,766.0 468.3,750.7 C 460.0,735.0 450.0,723.3 438.3,715.0 C 423.3,703.3 403.3,696.7 376.7,695.0 C 353.3,694.0 330.0,695.0 313.3,699.3 C 300.0,703.3 290.0,711.7 283.3,723.3 C 279.3,731.7 277.3,738.3 275.0,741.7 C 270.0,746.7 261.7,748.7 255.0,747.3 C 243.3,744.0 235.0,733.3 230.0,720.0 C 226.7,711.7 225.0,706.7 225.0,700.0 Z" fill="#c9023d" stroke="#1c0509" stroke-width="1.5" stroke-linejoin="round" />
<path d="M 283.3,660.0 C 323.3,650.0 363.3,646.0 396.7,646.7 C 430.0,647.3 456.7,653.3 480.0,666.7 C 500.0,680.0 511.7,698.3 518.3,718.3 C 510.0,701.7 498.3,687.3 480.0,675.0 C 456.7,661.7 430.0,654.0 396.7,652.0 C 356.7,650.7 323.3,653.3 283.3,660.0 Z" fill="#de1448" stroke="#1c0509" stroke-width="0.7" stroke-linejoin="round" />
<path d="M 966.7,693.3 C 966.7,676.7 971.7,663.3 983.3,652.7 C 996.7,643.3 1020.0,638.3 1050.0,636.0 C 1083.3,633.3 1120.0,634.0 1150.0,640.0 C 1180.0,647.3 1203.3,663.3 1216.7,685.0 C 1226.7,703.3 1235.0,726.7 1238.3,746.7 C 1240.7,763.3 1237.3,775.0 1228.3,782.7 C 1220.0,789.3 1206.7,790.0 1196.7,785.0 C 1186.7,780.0 1180.0,773.3 1175.0,765.0 C 1168.3,753.3 1161.7,740.0 1153.3,729.3 C 1143.3,715.0 1130.0,705.0 1110.0,698.3 C 1090.0,693.3 1063.3,692.7 1046.7,696.0 C 1033.3,699.3 1023.3,706.7 1016.7,716.0 C 1013.3,721.7 1011.7,730.0 1006.7,736.0 C 1001.7,741.7 993.3,743.3 986.7,740.7 C 978.3,736.7 973.3,726.7 970.0,715.0 C 967.7,706.7 966.7,700.0 966.7,693.3 Z" fill="#c9023d" stroke="#1c0509" stroke-width="1.5" stroke-linejoin="round" />
<path d="M 1016.7,716.0 C 1023.3,706.7 1033.3,699.3 1046.7,696.0 C 1063.3,692.7 1090.0,693.3 1110.0,698.3 C 1130.0,705.0 1143.3,715.0 1153.3,729.3" fill="none" stroke="#1c0509" stroke-width="1.3" stroke-linejoin="round" />
<path d="M 979.3,692.7 C 981.7,706.7 983.3,718.3 987.3,726.7 C 990.0,731.7 995.0,730.0 995.0,725.0 C 993.3,715.0 986.7,703.3 979.3,692.7 Z" fill="none" stroke="#1c0509" stroke-width="1.2" stroke-linejoin="round" />
<path d="M 1200.0,684.0 C 1206.7,703.3 1211.7,723.3 1212.3,741.7 C 1212.7,753.3 1208.3,759.3 1204.0,762.7 C 1200.0,766.7 1204.0,771.7 1210.0,770.7 C 1218.3,768.3 1224.0,760.0 1224.0,748.3 C 1224.0,730.0 1215.0,706.7 1200.0,684.0 Z" fill="none" stroke="#1c0509" stroke-width="1.2" stroke-linejoin="round" />
<rect x="196.5" y="307.5" width="1068" height="576.5" fill="none" stroke="#8e8e8e" stroke-width="3"/>
<path d="M730.7,563.5 V627 M699.5,595 H762" stroke="#a8aeb4" stroke-width="1" fill="none"/>
<circle cx="177.5" cy="288.3" r="16.7" fill="#5a6673"/><path d="M169.2,280 L185.8,296.6 M185.8,280 L169.2,296.6" stroke="#fff" stroke-width="1.9" stroke-linecap="round"/>
<circle cx="1282.8" cy="288.3" r="16.7" fill="#5a6673"/>
<path d="M1289.6,292.6 A8.1,8.1 0 1 1 1288.3,282.6" fill="none" stroke="#fff" stroke-width="1.8"/><polygon points="1292.2,280.2 1292.8,287 1286,286.4" fill="#fff"/>
<circle cx="1283" cy="902.8" r="16.7" fill="#5a6673"/>
<path d="M1275.4,895.6 L1290.8,911" stroke="#fff" stroke-width="1.9" fill="none"/><path d="M1274.6,900.6 V894.6 H1280.6 M1291.6,905.6 V911.6 H1285.6" stroke="#fff" stroke-width="2" fill="none"/>
<circle cx="177.5" cy="902.8" r="16.7" fill="#5a6673"/>
<text x="717.3" y="287.9" font-size="15" fill="#757575" font-weight="normal" text-anchor="start" textLength="26.0" lengthAdjust="spacingAndGlyphs" font-family="Liberation Sans">9.5"</text>
<text x="1302.0" y="596.0" font-size="15" fill="#757575" font-weight="normal" text-anchor="start" textLength="41.0" lengthAdjust="spacingAndGlyphs" font-family="Liberation Sans">5.129"</text>
</g></svg>
<svg class="abs" style="left:0;top:0;font-family:'Liberation Sans',sans-serif" width="1920" height="1026" viewBox="0 0 1920 1026">
<defs><clipPath id="lst"><rect x="1595" y="209" width="304" height="697"/></clipPath></defs><g clip-path="url(#lst)"><g transform="translate(1872.2 228.2)"><path d="M-8.6,0.3 C-5.5,-4.6 -2.5,-5.9 0,-5.9 C2.5,-5.9 5.5,-4.6 8.6,0.3 C5.5,4.8 2.5,5.9 0,5.9 C-2.5,5.9 -5.5,4.8 -8.6,0.3 Z" fill="#f2f2f2" stroke="#111" stroke-width="1.7" stroke-linejoin="round"/><circle cx="0" cy="0" r="4.3" fill="#111"/><circle cx="-1.5" cy="-1.7" r="1.5" fill="#e8e8e8"/></g>
<path d="M1630.4,247.5 H1899" stroke="#a9a9a9" stroke-width="1"/>
<path d="M1630.4,301.2 H1899" stroke="#a9a9a9" stroke-width="1"/>
<path d="M1630.4,354.9 H1899" stroke="#a9a9a9" stroke-width="1"/>
<path d="M1630.4,408.6 H1899" stroke="#a9a9a9" stroke-width="1"/>
<path d="M1630.4,462.3 H1899" stroke="#a9a9a9" stroke-width="1"/>
<path d="M1630.4,516.0 H1899" stroke="#a9a9a9" stroke-width="1"/>
<path d="M1630.4,569.7 H1899" stroke="#a9a9a9" stroke-width="1"/>
<path d="M1630.4,623.4 H1899" stroke="#a9a9a9" stroke-width="1"/>
<path d="M1630.4,677.1 H1899" stroke="#a9a9a9" stroke-width="1"/>
<path d="M1630.4,730.8 H1899" stroke="#a9a9a9" stroke-width="1"/>
<path d="M1630.4,784.5 H1899" stroke="#a9a9a9" stroke-width="1"/>
<path d="M1630.4,838.2 H1899" stroke="#a9a9a9" stroke-width="1"/>
<path d="M1630.4,891.9 H1899" stroke="#a9a9a9" stroke-width="1"/>
<g transform="translate(1631.5 264.8) scale(0.1800) translate(-530.0 -610.0)" fill="#f4f4f4" stroke="#cfcfcf" stroke-width="3.3"><path d="M 638.3,635.0 C 631.7,621.7 621.7,616.0 611.7,616.7 C 595.0,618.3 585.0,631.7 586.7,646.7 C 588.3,666.7 613.3,686.7 636.7,708.7 C 663.3,686.7 688.3,666.7 690.0,645.0 C 690.7,630.0 680.0,617.3 665.0,617.3 C 653.3,617.3 643.3,625.0 638.3,635.0 Z"/><path d="M 678.3,668.3 L 699.3,677.3 L 706.0,657.3 L 726.0,682.0 L 694.3,697.7 L 697.3,681.7 L 676.0,672.7 Z"/><path d="M 542.7,612.6 L 549.8,613.6 L 559.8,631.8 L 565.4,633.2 L 558.4,617.8 L 567.8,619.2 L 578.3,638.8 L 587.7,642.6 L 587.7,646.8 L 577.1,645.8 L 560.8,656.4 L 549.1,652.4 L 563.3,641.2 L 558.4,639.8 L 542.0,651.9 L 532.2,648.2 L 550.2,633.2 Z"/></g>
<g transform="translate(1631.0 316.7) scale(0.1345) translate(-965.0 -632.0)" fill="#c9023d"><path d="M 966.7,693.3 C 966.7,676.7 971.7,663.3 983.3,652.7 C 996.7,643.3 1020.0,638.3 1050.0,636.0 C 1083.3,633.3 1120.0,634.0 1150.0,640.0 C 1180.0,647.3 1203.3,663.3 1216.7,685.0 C 1226.7,703.3 1235.0,726.7 1238.3,746.7 C 1240.7,763.3 1237.3,775.0 1228.3,782.7 C 1220.0,789.3 1206.7,790.0 1196.7,785.0 C 1186.7,780.0 1180.0,773.3 1175.0,765.0 C 1168.3,753.3 1161.7,740.0 1153.3,729.3 C 1143.3,715.0 1130.0,705.0 1110.0,698.3 C 1090.0,693.3 1063.3,692.7 1046.7,696.0 C 1033.3,699.3 1023.3,706.7 1016.7,716.0 C 1013.3,721.7 1011.7,730.0 1006.7,736.0 C 1001.7,741.7 993.3,743.3 986.7,740.7 C 978.3,736.7 973.3,726.7 970.0,715.0 C 967.7,706.7 966.7,700.0 966.7,693.3 Z"/></g>
<g transform="translate(1631.0 371.7) scale(0.0789) translate(-793.0 -581.0)" fill="#8b5600"><rect x="793" y="581" width="459" height="104"/><path d="M960,685 C965,740 990,760 1000,700 L1000,685 Z"/><path d="M1180,685 C1190,740 1200,790 1230,785 C1250,770 1240,720 1225,685 Z"/></g>
<g transform="translate(1633.0 418.9) scale(0.0660) translate(-766.0 -308.0)" fill="#f2f2f2"><path d="M 793.3,583.3 L 800.0,556.7 C 786.7,546.7 771.7,523.3 768.3,503.3 C 765.0,476.7 771.7,453.3 780.0,440.0 C 790.0,430.0 800.0,425.0 813.3,421.7 C 791.7,411.7 771.7,393.3 767.7,374.0 C 763.3,350.0 773.3,333.3 793.3,327.3 C 806.7,323.3 818.3,323.3 826.7,326.0 C 833.3,318.3 846.7,312.7 860.0,312.7 C 880.0,314.0 895.0,330.0 898.3,353.3 C 899.3,366.7 895.0,378.3 888.3,387.3 L 911.7,388.3 C 903.3,370.0 900.0,346.7 911.7,323.3 C 920.0,311.7 940.0,306.7 956.7,309.3 C 963.3,310.7 968.3,314.0 973.3,318.3 C 980.0,312.7 995.0,308.3 1010.0,310.7 C 1030.0,316.0 1041.7,336.7 1042.3,356.7 C 1042.7,376.7 1033.3,393.3 1018.3,405.0 C 1028.3,406.7 1036.7,410.0 1043.3,414.0 C 1043.3,386.7 1048.3,356.7 1063.3,340.0 C 1070.0,333.3 1076.7,332.0 1085.0,332.7 C 1103.3,335.0 1115.0,355.0 1119.3,375.0 C 1130.0,371.7 1143.3,370.0 1156.7,373.3 C 1170.0,378.3 1177.3,391.7 1177.3,405.0 C 1176.7,423.3 1166.7,440.0 1155.0,449.3 C 1173.3,451.7 1193.3,463.3 1203.3,483.3 C 1216.7,482.7 1233.3,486.7 1246.7,498.3 C 1260.0,511.7 1265.0,530.0 1262.7,546.7 C 1260.7,561.7 1255.0,573.3 1250.0,583.3 Z"/><path d="M 966.7,693.3 C 966.7,676.7 971.7,663.3 983.3,652.7 C 996.7,643.3 1020.0,638.3 1050.0,636.0 C 1083.3,633.3 1120.0,634.0 1150.0,640.0 C 1180.0,647.3 1203.3,663.3 1216.7,685.0 C 1226.7,703.3 1235.0,726.7 1238.3,746.7 C 1240.7,763.3 1237.3,775.0 1228.3,782.7 C 1220.0,789.3 1206.7,790.0 1196.7,785.0 C 1186.7,780.0 1180.0,773.3 1175.0,765.0 C 1168.3,753.3 1161.7,740.0 1153.3,729.3 C 1143.3,715.0 1130.0,705.0 1110.0,698.3 C 1090.0,693.3 1063.3,692.7 1046.7,696.0 C 1033.3,699.3 1023.3,706.7 1016.7,716.0 C 1013.3,721.7 1011.7,730.0 1006.7,736.0 C 1001.7,741.7 993.3,743.3 986.7,740.7 C 978.3,736.7 973.3,726.7 970.0,715.0 C 967.7,706.7 966.7,700.0 966.7,693.3 Z"/><rect x="790" y="560" width="462" height="159"/></g>
<g transform="translate(1632.5 472.1) scale(0.0680) translate(-766.0 -308.0)" fill="#de1448"><path d="M 793.3,583.3 L 800.0,556.7 C 786.7,546.7 771.7,523.3 768.3,503.3 C 765.0,476.7 771.7,453.3 780.0,440.0 C 790.0,430.0 800.0,425.0 813.3,421.7 C 791.7,411.7 771.7,393.3 767.7,374.0 C 763.3,350.0 773.3,333.3 793.3,327.3 C 806.7,323.3 818.3,323.3 826.7,326.0 C 833.3,318.3 846.7,312.7 860.0,312.7 C 880.0,314.0 895.0,330.0 898.3,353.3 C 899.3,366.7 895.0,378.3 888.3,387.3 L 911.7,388.3 C 903.3,370.0 900.0,346.7 911.7,323.3 C 920.0,311.7 940.0,306.7 956.7,309.3 C 963.3,310.7 968.3,314.0 973.3,318.3 C 980.0,312.7 995.0,308.3 1010.0,310.7 C 1030.0,316.0 1041.7,336.7 1042.3,356.7 C 1042.7,376.7 1033.3,393.3 1018.3,405.0 C 1028.3,406.7 1036.7,410.0 1043.3,414.0 C 1043.3,386.7 1048.3,356.7 1063.3,340.0 C 1070.0,333.3 1076.7,332.0 1085.0,332.7 C 1103.3,335.0 1115.0,355.0 1119.3,375.0 C 1130.0,371.7 1143.3,370.0 1156.7,373.3 C 1170.0,378.3 1177.3,391.7 1177.3,405.0 C 1176.7,423.3 1166.7,440.0 1155.0,449.3 C 1173.3,451.7 1193.3,463.3 1203.3,483.3 C 1216.7,482.7 1233.3,486.7 1246.7,498.3 C 1260.0,511.7 1265.0,530.0 1262.7,546.7 C 1260.7,561.7 1255.0,573.3 1250.0,583.3 Z"/><path d="M 966.7,693.3 C 966.7,676.7 971.7,663.3 983.3,652.7 C 996.7,643.3 1020.0,638.3 1050.0,636.0 C 1083.3,633.3 1120.0,634.0 1150.0,640.0 C 1180.0,647.3 1203.3,663.3 1216.7,685.0 C 1226.7,703.3 1235.0,726.7 1238.3,746.7 C 1240.7,763.3 1237.3,775.0 1228.3,782.7 C 1220.0,789.3 1206.7,790.0 1196.7,785.0 C 1186.7,780.0 1180.0,773.3 1175.0,765.0 C 1168.3,753.3 1161.7,740.0 1153.3,729.3 C 1143.3,715.0 1130.0,705.0 1110.0,698.3 C 1090.0,693.3 1063.3,692.7 1046.7,696.0 C 1033.3,699.3 1023.3,706.7 1016.7,716.0 C 1013.3,721.7 1011.7,730.0 1006.7,736.0 C 1001.7,741.7 993.3,743.3 986.7,740.7 C 978.3,736.7 973.3,726.7 970.0,715.0 C 967.7,706.7 966.7,700.0 966.7,693.3 Z"/><rect x="790" y="560" width="462" height="159"/></g>
<g transform="translate(1637.5 478.1) scale(0.0727) translate(-778.0 -322.0)" fill="#e6dcdf"><path d="M 829.3,342.7 C 816.7,333.3 795.0,332.7 783.3,346.7 C 770.7,364.0 777.3,386.0 796.7,395.3 C 810.0,402.7 830.0,410.7 844.0,417.0 C 866.7,396.7 888.3,377.3 887.3,356.7 C 887.3,336.7 873.3,324.0 856.7,325.0 C 843.3,326.0 833.3,333.3 829.3,342.7 Z"/></g>
<g transform="translate(1652.2 475.7) scale(0.0591) translate(-778.0 -322.0)" fill="#e6dcdf"><path d="M 829.3,342.7 C 816.7,333.3 795.0,332.7 783.3,346.7 C 770.7,364.0 777.3,386.0 796.7,395.3 C 810.0,402.7 830.0,410.7 844.0,417.0 C 866.7,396.7 888.3,377.3 887.3,356.7 C 887.3,336.7 873.3,324.0 856.7,325.0 C 843.3,326.0 833.3,333.3 829.3,342.7 Z"/></g>
<g transform="translate(1632.5 525.8) scale(0.0680) translate(-766.0 -308.0)" fill="#fa3400"><path d="M 793.3,583.3 L 800.0,556.7 C 786.7,546.7 771.7,523.3 768.3,503.3 C 765.0,476.7 771.7,453.3 780.0,440.0 C 790.0,430.0 800.0,425.0 813.3,421.7 C 791.7,411.7 771.7,393.3 767.7,374.0 C 763.3,350.0 773.3,333.3 793.3,327.3 C 806.7,323.3 818.3,323.3 826.7,326.0 C 833.3,318.3 846.7,312.7 860.0,312.7 C 880.0,314.0 895.0,330.0 898.3,353.3 C 899.3,366.7 895.0,378.3 888.3,387.3 L 911.7,388.3 C 903.3,370.0 900.0,346.7 911.7,323.3 C 920.0,311.7 940.0,306.7 956.7,309.3 C 963.3,310.7 968.3,314.0 973.3,318.3 C 980.0,312.7 995.0,308.3 1010.0,310.7 C 1030.0,316.0 1041.7,336.7 1042.3,356.7 C 1042.7,376.7 1033.3,393.3 1018.3,405.0 C 1028.3,406.7 1036.7,410.0 1043.3,414.0 C 1043.3,386.7 1048.3,356.7 1063.3,340.0 C 1070.0,333.3 1076.7,332.0 1085.0,332.7 C 1103.3,335.0 1115.0,355.0 1119.3,375.0 C 1130.0,371.7 1143.3,370.0 1156.7,373.3 C 1170.0,378.3 1177.3,391.7 1177.3,405.0 C 1176.7,423.3 1166.7,440.0 1155.0,449.3 C 1173.3,451.7 1193.3,463.3 1203.3,483.3 C 1216.7,482.7 1233.3,486.7 1246.7,498.3 C 1260.0,511.7 1265.0,530.0 1262.7,546.7 C 1260.7,561.7 1255.0,573.3 1250.0,583.3 Z"/><path d="M 966.7,693.3 C 966.7,676.7 971.7,663.3 983.3,652.7 C 996.7,643.3 1020.0,638.3 1050.0,636.0 C 1083.3,633.3 1120.0,634.0 1150.0,640.0 C 1180.0,647.3 1203.3,663.3 1216.7,685.0 C 1226.7,703.3 1235.0,726.7 1238.3,746.7 C 1240.7,763.3 1237.3,775.0 1228.3,782.7 C 1220.0,789.3 1206.7,790.0 1196.7,785.0 C 1186.7,780.0 1180.0,773.3 1175.0,765.0 C 1168.3,753.3 1161.7,740.0 1153.3,729.3 C 1143.3,715.0 1130.0,705.0 1110.0,698.3 C 1090.0,693.3 1063.3,692.7 1046.7,696.0 C 1033.3,699.3 1023.3,706.7 1016.7,716.0 C 1013.3,721.7 1011.7,730.0 1006.7,736.0 C 1001.7,741.7 993.3,743.3 986.7,740.7 C 978.3,736.7 973.3,726.7 970.0,715.0 C 967.7,706.7 966.7,700.0 966.7,693.3 Z"/><rect x="790" y="560" width="462" height="159"/></g>
<g transform="translate(1631.5 586.7) scale(0.1078) translate(-224.0 -626.0)" fill="#c9023d"><path d="M 225.0,700.0 C 225.0,686.7 226.7,675.0 231.7,665.0 C 238.3,650.0 250.0,640.0 266.7,636.7 C 290.0,631.7 330.0,628.3 390.0,627.3 C 423.3,627.3 456.7,633.3 483.3,644.0 C 503.3,653.3 523.3,671.7 536.7,691.7 C 546.7,708.3 553.3,726.7 556.0,743.3 C 558.0,760.0 556.7,773.3 550.7,782.7 C 545.0,791.7 536.7,796.0 523.3,796.7 C 510.0,797.3 498.3,793.3 488.3,784.0 C 481.7,776.7 476.7,766.0 468.3,750.7 C 460.0,735.0 450.0,723.3 438.3,715.0 C 423.3,703.3 403.3,696.7 376.7,695.0 C 353.3,694.0 330.0,695.0 313.3,699.3 C 300.0,703.3 290.0,711.7 283.3,723.3 C 279.3,731.7 277.3,738.3 275.0,741.7 C 270.0,746.7 261.7,748.7 255.0,747.3 C 243.3,744.0 235.0,733.3 230.0,720.0 C 226.7,711.7 225.0,706.7 225.0,700.0 Z"/></g>
<g transform="translate(1630.5 637.0) scale(0.0637) translate(-196.0 -430.0)" fill="#de1448"><path d="M 215.0,597.3 L 230.0,592.7 L 250.0,590.0 L 260.0,575.0 L 283.3,561.7 L 323.3,551.7 L 390.0,545.7 L 456.7,541.7 L 503.3,538.7 L 550.0,459.3 L 546.0,448.3 C 547.3,441.7 555.0,436.0 573.3,433.3 C 606.7,430.0 673.3,430.0 730.0,434.0 C 750.0,436.0 760.7,441.7 768.3,455.0 L 771.7,463.3 L 768.3,476.7 L 768.3,503.3 L 780.0,536.7 L 800.0,556.7 L 792.7,566.7 L 792.3,581.7 L 788.0,640.0 L 788.0,746.7 C 787.3,760.0 781.7,773.3 768.3,775.3 L 700.0,777.3 L 770.0,775.0 L 560.0,776.7 L 556.7,763.3 L 523.3,700.0 L 390.0,666.7 L 256.7,658.3 L 233.3,663.3 L 221.7,643.3 C 215.0,626.7 210.7,616.7 210.7,606.7 C 210.7,601.7 212.7,598.7 215.0,597.3 Z"/><path d="M 225.0,700.0 C 225.0,686.7 226.7,675.0 231.7,665.0 C 238.3,650.0 250.0,640.0 266.7,636.7 C 290.0,631.7 330.0,628.3 390.0,627.3 C 423.3,627.3 456.7,633.3 483.3,644.0 C 503.3,653.3 523.3,671.7 536.7,691.7 C 546.7,708.3 553.3,726.7 556.0,743.3 C 558.0,760.0 556.7,773.3 550.7,782.7 C 545.0,791.7 536.7,796.0 523.3,796.7 C 510.0,797.3 498.3,793.3 488.3,784.0 C 481.7,776.7 476.7,766.0 468.3,750.7 C 460.0,735.0 450.0,723.3 438.3,715.0 C 423.3,703.3 403.3,696.7 376.7,695.0 C 353.3,694.0 330.0,695.0 313.3,699.3 C 300.0,703.3 290.0,711.7 283.3,723.3 C 279.3,731.7 277.3,738.3 275.0,741.7 C 270.0,746.7 261.7,748.7 255.0,747.3 C 243.3,744.0 235.0,733.3 230.0,720.0 C 226.7,711.7 225.0,706.7 225.0,700.0 Z"/></g>
<g transform="translate(1655.4 638.3) scale(0.0667) translate(-575.0 -470.0)" fill="#e3d3d8"><path d="M 576.7,479.3 C 576.7,476.0 578.7,474.0 582.7,473.7 L 616.7,473.3 L 616.7,561.7 L 605.0,561.3 C 596.7,560.7 591.7,556.7 590.0,550.0 L 586.7,540.0 Z"/><path d="M 624.3,473.3 L 698.3,474.0 C 703.3,474.0 706.0,476.7 707.3,481.7 L 722.7,545.0 C 724.0,555.0 721.7,562.7 713.3,563.3 L 624.3,562.0 Z"/></g>
<g transform="translate(1630.5 694.3) scale(0.0355) translate(-196.0 -308.0)" fill="#c9023d"><path d="M 215.0,597.3 L 230.0,592.7 L 250.0,590.0 L 260.0,575.0 L 283.3,561.7 L 323.3,551.7 L 390.0,545.7 L 456.7,541.7 L 503.3,538.7 L 550.0,459.3 L 546.0,448.3 C 547.3,441.7 555.0,436.0 573.3,433.3 C 606.7,430.0 673.3,430.0 730.0,434.0 C 750.0,436.0 760.7,441.7 768.3,455.0 L 771.7,463.3 L 768.3,476.7 L 768.3,503.3 L 780.0,536.7 L 800.0,556.7 L 792.7,566.7 L 792.3,581.7 L 788.0,640.0 L 788.0,746.7 C 787.3,760.0 781.7,773.3 768.3,775.3 L 700.0,777.3 L 770.0,775.0 L 560.0,776.7 L 556.7,763.3 L 523.3,700.0 L 390.0,666.7 L 256.7,658.3 L 233.3,663.3 L 221.7,643.3 C 215.0,626.7 210.7,616.7 210.7,606.7 C 210.7,601.7 212.7,598.7 215.0,597.3 Z"/><path d="M 225.0,700.0 C 225.0,686.7 226.7,675.0 231.7,665.0 C 238.3,650.0 250.0,640.0 266.7,636.7 C 290.0,631.7 330.0,628.3 390.0,627.3 C 423.3,627.3 456.7,633.3 483.3,644.0 C 503.3,653.3 523.3,671.7 536.7,691.7 C 546.7,708.3 553.3,726.7 556.0,743.3 C 558.0,760.0 556.7,773.3 550.7,782.7 C 545.0,791.7 536.7,796.0 523.3,796.7 C 510.0,797.3 498.3,793.3 488.3,784.0 C 481.7,776.7 476.7,766.0 468.3,750.7 C 460.0,735.0 450.0,723.3 438.3,715.0 C 423.3,703.3 403.3,696.7 376.7,695.0 C 353.3,694.0 330.0,695.0 313.3,699.3 C 300.0,703.3 290.0,711.7 283.3,723.3 C 279.3,731.7 277.3,738.3 275.0,741.7 C 270.0,746.7 261.7,748.7 255.0,747.3 C 243.3,744.0 235.0,733.3 230.0,720.0 C 226.7,711.7 225.0,706.7 225.0,700.0 Z"/><path d="M 966.7,693.3 C 966.7,676.7 971.7,663.3 983.3,652.7 C 996.7,643.3 1020.0,638.3 1050.0,636.0 C 1083.3,633.3 1120.0,634.0 1150.0,640.0 C 1180.0,647.3 1203.3,663.3 1216.7,685.0 C 1226.7,703.3 1235.0,726.7 1238.3,746.7 C 1240.7,763.3 1237.3,775.0 1228.3,782.7 C 1220.0,789.3 1206.7,790.0 1196.7,785.0 C 1186.7,780.0 1180.0,773.3 1175.0,765.0 C 1168.3,753.3 1161.7,740.0 1153.3,729.3 C 1143.3,715.0 1130.0,705.0 1110.0,698.3 C 1090.0,693.3 1063.3,692.7 1046.7,696.0 C 1033.3,699.3 1023.3,706.7 1016.7,716.0 C 1013.3,721.7 1011.7,730.0 1006.7,736.0 C 1001.7,741.7 993.3,743.3 986.7,740.7 C 978.3,736.7 973.3,726.7 970.0,715.0 C 967.7,706.7 966.7,700.0 966.7,693.3 Z"/><path d="M 793.3,583.3 L 800.0,556.7 C 786.7,546.7 771.7,523.3 768.3,503.3 C 765.0,476.7 771.7,453.3 780.0,440.0 C 790.0,430.0 800.0,425.0 813.3,421.7 C 791.7,411.7 771.7,393.3 767.7,374.0 C 763.3,350.0 773.3,333.3 793.3,327.3 C 806.7,323.3 818.3,323.3 826.7,326.0 C 833.3,318.3 846.7,312.7 860.0,312.7 C 880.0,314.0 895.0,330.0 898.3,353.3 C 899.3,366.7 895.0,378.3 888.3,387.3 L 911.7,388.3 C 903.3,370.0 900.0,346.7 911.7,323.3 C 920.0,311.7 940.0,306.7 956.7,309.3 C 963.3,310.7 968.3,314.0 973.3,318.3 C 980.0,312.7 995.0,308.3 1010.0,310.7 C 1030.0,316.0 1041.7,336.7 1042.3,356.7 C 1042.7,376.7 1033.3,393.3 1018.3,405.0 C 1028.3,406.7 1036.7,410.0 1043.3,414.0 C 1043.3,386.7 1048.3,356.7 1063.3,340.0 C 1070.0,333.3 1076.7,332.0 1085.0,332.7 C 1103.3,335.0 1115.0,355.0 1119.3,375.0 C 1130.0,371.7 1143.3,370.0 1156.7,373.3 C 1170.0,378.3 1177.3,391.7 1177.3,405.0 C 1176.7,423.3 1166.7,440.0 1155.0,449.3 C 1173.3,451.7 1193.3,463.3 1203.3,483.3 C 1216.7,482.7 1233.3,486.7 1246.7,498.3 C 1260.0,511.7 1265.0,530.0 1262.7,546.7 C 1260.7,561.7 1255.0,573.3 1250.0,583.3 Z"/><rect x="780" y="570" width="472" height="150"/></g>
<circle cx="1649" cy="756.2" r="16.9" fill="#c6bab7" stroke="#9a8f8d" stroke-width="0.9"/>
<path d="M1640,752.2 Q1649,742.2 1658.5,752.8 Q1649,748.2 1640,752.2 Z" fill="#ebe6e5" stroke="#9a8f8d" stroke-width="0.6"/>
<circle cx="1649" cy="810.2" r="16.9" fill="#c6bab7" stroke="#9a8f8d" stroke-width="0.9"/>
<path d="M1640,806.2 Q1649,796.2 1658.5,806.8 Q1649,802.2 1640,806.2 Z" fill="#ebe6e5" stroke="#9a8f8d" stroke-width="0.6"/>
<g transform="translate(1630.5 853.8) scale(0.0355) translate(-196.0 -308.0)" fill="#150606"><path d="M 215.0,597.3 L 230.0,592.7 L 250.0,590.0 L 260.0,575.0 L 283.3,561.7 L 323.3,551.7 L 390.0,545.7 L 456.7,541.7 L 503.3,538.7 L 550.0,459.3 L 546.0,448.3 C 547.3,441.7 555.0,436.0 573.3,433.3 C 606.7,430.0 673.3,430.0 730.0,434.0 C 750.0,436.0 760.7,441.7 768.3,455.0 L 771.7,463.3 L 768.3,476.7 L 768.3,503.3 L 780.0,536.7 L 800.0,556.7 L 792.7,566.7 L 792.3,581.7 L 788.0,640.0 L 788.0,746.7 C 787.3,760.0 781.7,773.3 768.3,775.3 L 700.0,777.3 L 770.0,775.0 L 560.0,776.7 L 556.7,763.3 L 523.3,700.0 L 390.0,666.7 L 256.7,658.3 L 233.3,663.3 L 221.7,643.3 C 215.0,626.7 210.7,616.7 210.7,606.7 C 210.7,601.7 212.7,598.7 215.0,597.3 Z"/><path d="M 225.0,700.0 C 225.0,686.7 226.7,675.0 231.7,665.0 C 238.3,650.0 250.0,640.0 266.7,636.7 C 290.0,631.7 330.0,628.3 390.0,627.3 C 423.3,627.3 456.7,633.3 483.3,644.0 C 503.3,653.3 523.3,671.7 536.7,691.7 C 546.7,708.3 553.3,726.7 556.0,743.3 C 558.0,760.0 556.7,773.3 550.7,782.7 C 545.0,791.7 536.7,796.0 523.3,796.7 C 510.0,797.3 498.3,793.3 488.3,784.0 C 481.7,776.7 476.7,766.0 468.3,750.7 C 460.0,735.0 450.0,723.3 438.3,715.0 C 423.3,703.3 403.3,696.7 376.7,695.0 C 353.3,694.0 330.0,695.0 313.3,699.3 C 300.0,703.3 290.0,711.7 283.3,723.3 C 279.3,731.7 277.3,738.3 275.0,741.7 C 270.0,746.7 261.7,748.7 255.0,747.3 C 243.3,744.0 235.0,733.3 230.0,720.0 C 226.7,711.7 225.0,706.7 225.0,700.0 Z"/><path d="M 966.7,693.3 C 966.7,676.7 971.7,663.3 983.3,652.7 C 996.7,643.3 1020.0,638.3 1050.0,636.0 C 1083.3,633.3 1120.0,634.0 1150.0,640.0 C 1180.0,647.3 1203.3,663.3 1216.7,685.0 C 1226.7,703.3 1235.0,726.7 1238.3,746.7 C 1240.7,763.3 1237.3,775.0 1228.3,782.7 C 1220.0,789.3 1206.7,790.0 1196.7,785.0 C 1186.7,780.0 1180.0,773.3 1175.0,765.0 C 1168.3,753.3 1161.7,740.0 1153.3,729.3 C 1143.3,715.0 1130.0,705.0 1110.0,698.3 C 1090.0,693.3 1063.3,692.7 1046.7,696.0 C 1033.3,699.3 1023.3,706.7 1016.7,716.0 C 1013.3,721.7 1011.7,730.0 1006.7,736.0 C 1001.7,741.7 993.3,743.3 986.7,740.7 C 978.3,736.7 973.3,726.7 970.0,715.0 C 967.7,706.7 966.7,700.0 966.7,693.3 Z"/><path d="M 793.3,583.3 L 800.0,556.7 C 786.7,546.7 771.7,523.3 768.3,503.3 C 765.0,476.7 771.7,453.3 780.0,440.0 C 790.0,430.0 800.0,425.0 813.3,421.7 C 791.7,411.7 771.7,393.3 767.7,374.0 C 763.3,350.0 773.3,333.3 793.3,327.3 C 806.7,323.3 818.3,323.3 826.7,326.0 C 833.3,318.3 846.7,312.7 860.0,312.7 C 880.0,314.0 895.0,330.0 898.3,353.3 C 899.3,366.7 895.0,378.3 888.3,387.3 L 911.7,388.3 C 903.3,370.0 900.0,346.7 911.7,323.3 C 920.0,311.7 940.0,306.7 956.7,309.3 C 963.3,310.7 968.3,314.0 973.3,318.3 C 980.0,312.7 995.0,308.3 1010.0,310.7 C 1030.0,316.0 1041.7,336.7 1042.3,356.7 C 1042.7,376.7 1033.3,393.3 1018.3,405.0 C 1028.3,406.7 1036.7,410.0 1043.3,414.0 C 1043.3,386.7 1048.3,356.7 1063.3,340.0 C 1070.0,333.3 1076.7,332.0 1085.0,332.7 C 1103.3,335.0 1115.0,355.0 1119.3,375.0 C 1130.0,371.7 1143.3,370.0 1156.7,373.3 C 1170.0,378.3 1177.3,391.7 1177.3,405.0 C 1176.7,423.3 1166.7,440.0 1155.0,449.3 C 1173.3,451.7 1193.3,463.3 1203.3,483.3 C 1216.7,482.7 1233.3,486.7 1246.7,498.3 C 1260.0,511.7 1265.0,530.0 1262.7,546.7 C 1260.7,561.7 1255.0,573.3 1250.0,583.3 Z"/><rect x="780" y="570" width="472" height="150"/><circle cx="372.7" cy="789.4" r="93.3"/><circle cx="1089.2" cy="789.4" r="93.3"/><rect x="540" y="700" width="560" height="90"/></g>
<text x="1680.6" y="276.8" font-size="15" fill="#1c1c1c" font-weight="normal" text-anchor="start" textLength="65.3" lengthAdjust="spacingAndGlyphs" >Basic Cut</text>
<g transform="translate(1872.2 273.1)"><path d="M-8.6,0.3 C-5.5,-4.6 -2.5,-5.9 0,-5.9 C2.5,-5.9 5.5,-4.6 8.6,0.3 C5.5,4.8 2.5,5.9 0,5.9 C-2.5,5.9 -5.5,4.8 -8.6,0.3 Z" fill="#f2f2f2" stroke="#111" stroke-width="1.7" stroke-linejoin="round"/><circle cx="0" cy="0" r="4.3" fill="#111"/><circle cx="-1.5" cy="-1.7" r="1.5" fill="#e8e8e8"/></g>
<text x="1680.6" y="330.5" font-size="15" fill="#1c1c1c" font-weight="normal" text-anchor="start" textLength="65.3" lengthAdjust="spacingAndGlyphs" >Basic Cut</text>
<g transform="translate(1872.2 326.8)"><path d="M-8.6,0.3 C-5.5,-4.6 -2.5,-5.9 0,-5.9 C2.5,-5.9 5.5,-4.6 8.6,0.3 C5.5,4.8 2.5,5.9 0,5.9 C-2.5,5.9 -5.5,4.8 -8.6,0.3 Z" fill="#f2f2f2" stroke="#111" stroke-width="1.7" stroke-linejoin="round"/><circle cx="0" cy="0" r="4.3" fill="#111"/><circle cx="-1.5" cy="-1.7" r="1.5" fill="#e8e8e8"/></g>
<text x="1680.6" y="384.2" font-size="15" fill="#1c1c1c" font-weight="normal" text-anchor="start" textLength="65.3" lengthAdjust="spacingAndGlyphs" >Basic Cut</text>
<g transform="translate(1872.2 380.5)"><path d="M-8.6,0.3 C-5.5,-4.6 -2.5,-5.9 0,-5.9 C2.5,-5.9 5.5,-4.6 8.6,0.3 C5.5,4.8 2.5,5.9 0,5.9 C-2.5,5.9 -5.5,4.8 -8.6,0.3 Z" fill="#f2f2f2" stroke="#111" stroke-width="1.7" stroke-linejoin="round"/><circle cx="0" cy="0" r="4.3" fill="#111"/><circle cx="-1.5" cy="-1.7" r="1.5" fill="#e8e8e8"/></g>
<text x="1680.6" y="437.9" font-size="15" fill="#1c1c1c" font-weight="normal" text-anchor="start" textLength="65.3" lengthAdjust="spacingAndGlyphs" >Basic Cut</text>
<g transform="translate(1872.2 434.2)"><path d="M-8.6,0.3 C-5.5,-4.6 -2.5,-5.9 0,-5.9 C2.5,-5.9 5.5,-4.6 8.6,0.3 C5.5,4.8 2.5,5.9 0,5.9 C-2.5,5.9 -5.5,4.8 -8.6,0.3 Z" fill="#f2f2f2" stroke="#111" stroke-width="1.7" stroke-linejoin="round"/><circle cx="0" cy="0" r="4.3" fill="#111"/><circle cx="-1.5" cy="-1.7" r="1.5" fill="#e8e8e8"/></g>
<text x="1680.6" y="491.6" font-size="15" fill="#1c1c1c" font-weight="normal" text-anchor="start" textLength="65.3" lengthAdjust="spacingAndGlyphs" >Basic Cut</text>
<g transform="translate(1872.2 487.9)"><path d="M-8.6,0.3 C-5.5,-4.6 -2.5,-5.9 0,-5.9 C2.5,-5.9 5.5,-4.6 8.6,0.3 C5.5,4.8 2.5,5.9 0,5.9 C-2.5,5.9 -5.5,4.8 -8.6,0.3 Z" fill="#f2f2f2" stroke="#111" stroke-width="1.7" stroke-linejoin="round"/><circle cx="0" cy="0" r="4.3" fill="#111"/><circle cx="-1.5" cy="-1.7" r="1.5" fill="#e8e8e8"/></g>
<text x="1680.6" y="545.3" font-size="15" fill="#1c1c1c" font-weight="normal" text-anchor="start" textLength="65.3" lengthAdjust="spacingAndGlyphs" >Basic Cut</text>
<g transform="translate(1872.2 541.6)"><path d="M-8.6,0.3 C-5.5,-4.6 -2.5,-5.9 0,-5.9 C2.5,-5.9 5.5,-4.6 8.6,0.3 C5.5,4.8 2.5,5.9 0,5.9 C-2.5,5.9 -5.5,4.8 -8.6,0.3 Z" fill="#f2f2f2" stroke="#111" stroke-width="1.7" stroke-linejoin="round"/><circle cx="0" cy="0" r="4.3" fill="#111"/><circle cx="-1.5" cy="-1.7" r="1.5" fill="#e8e8e8"/></g>
<text x="1680.6" y="599.0" font-size="15" fill="#1c1c1c" font-weight="normal" text-anchor="start" textLength="65.3" lengthAdjust="spacingAndGlyphs" >Basic Cut</text>
<g transform="translate(1872.2 595.3)"><path d="M-8.6,0.3 C-5.5,-4.6 -2.5,-5.9 0,-5.9 C2.5,-5.9 5.5,-4.6 8.6,0.3 C5.5,4.8 2.5,5.9 0,5.9 C-2.5,5.9 -5.5,4.8 -8.6,0.3 Z" fill="#f2f2f2" stroke="#111" stroke-width="1.7" stroke-linejoin="round"/><circle cx="0" cy="0" r="4.3" fill="#111"/><circle cx="-1.5" cy="-1.7" r="1.5" fill="#e8e8e8"/></g>
<text x="1680.6" y="652.7" font-size="15" fill="#1c1c1c" font-weight="normal" text-anchor="start" textLength="65.3" lengthAdjust="spacingAndGlyphs" >Basic Cut</text>
<g transform="translate(1872.2 649.0)"><path d="M-8.6,0.3 C-5.5,-4.6 -2.5,-5.9 0,-5.9 C2.5,-5.9 5.5,-4.6 8.6,0.3 C5.5,4.8 2.5,5.9 0,5.9 C-2.5,5.9 -5.5,4.8 -8.6,0.3 Z" fill="#f2f2f2" stroke="#111" stroke-width="1.7" stroke-linejoin="round"/><circle cx="0" cy="0" r="4.3" fill="#111"/><circle cx="-1.5" cy="-1.7" r="1.5" fill="#e8e8e8"/></g>
<text x="1680.6" y="706.4" font-size="15" fill="#1c1c1c" font-weight="normal" text-anchor="start" textLength="65.3" lengthAdjust="spacingAndGlyphs" >Basic Cut</text>
<g transform="translate(1872.2 702.7)"><path d="M-8.6,0.3 C-5.5,-4.6 -2.5,-5.9 0,-5.9 C2.5,-5.9 5.5,-4.6 8.6,0.3 C5.5,4.8 2.5,5.9 0,5.9 C-2.5,5.9 -5.5,4.8 -8.6,0.3 Z" fill="#f2f2f2" stroke="#111" stroke-width="1.7" stroke-linejoin="round"/><circle cx="0" cy="0" r="4.3" fill="#111"/><circle cx="-1.5" cy="-1.7" r="1.5" fill="#e8e8e8"/></g>
<text x="1680.6" y="760.1" font-size="15" fill="#1c1c1c" font-weight="normal" text-anchor="start" textLength="65.3" lengthAdjust="spacingAndGlyphs" >Basic Cut</text>
<g transform="translate(1872.2 756.4)"><path d="M-8.6,0.3 C-5.5,-4.6 -2.5,-5.9 0,-5.9 C2.5,-5.9 5.5,-4.6 8.6,0.3 C5.5,4.8 2.5,5.9 0,5.9 C-2.5,5.9 -5.5,4.8 -8.6,0.3 Z" fill="#f2f2f2" stroke="#111" stroke-width="1.7" stroke-linejoin="round"/><circle cx="0" cy="0" r="4.3" fill="#111"/><circle cx="-1.5" cy="-1.7" r="1.5" fill="#e8e8e8"/></g>
<text x="1680.6" y="813.8" font-size="15" fill="#1c1c1c" font-weight="normal" text-anchor="start" textLength="65.3" lengthAdjust="spacingAndGlyphs" >Basic Cut</text>
<g transform="translate(1872.2 810.1)"><path d="M-8.6,0.3 C-5.5,-4.6 -2.5,-5.9 0,-5.9 C2.5,-5.9 5.5,-4.6 8.6,0.3 C5.5,4.8 2.5,5.9 0,5.9 C-2.5,5.9 -5.5,4.8 -8.6,0.3 Z" fill="#f2f2f2" stroke="#111" stroke-width="1.7" stroke-linejoin="round"/><circle cx="0" cy="0" r="4.3" fill="#111"/><circle cx="-1.5" cy="-1.7" r="1.5" fill="#e8e8e8"/></g>
<text x="1680.6" y="867.5" font-size="15" fill="#1c1c1c" font-weight="normal" text-anchor="start" textLength="65.3" lengthAdjust="spacingAndGlyphs" >Basic Cut</text>
<g transform="translate(1872.2 863.8)"><path d="M-8.6,0.3 C-5.5,-4.6 -2.5,-5.9 0,-5.9 C2.5,-5.9 5.5,-4.6 8.6,0.3 C5.5,4.8 2.5,5.9 0,5.9 C-2.5,5.9 -5.5,4.8 -8.6,0.3 Z" fill="#f2f2f2" stroke="#111" stroke-width="1.7" stroke-linejoin="round"/><circle cx="0" cy="0" r="4.3" fill="#111"/><circle cx="-1.5" cy="-1.7" r="1.5" fill="#e8e8e8"/></g></g><text x="1654.5" y="132.8" font-size="15" fill="#55565e" font-weight="normal" text-anchor="start" textLength="44.0" lengthAdjust="spacingAndGlyphs" >Layers</text>
<text x="1800.5" y="132.8" font-size="15" fill="#55565e" font-weight="normal" text-anchor="start" textLength="77.0" lengthAdjust="spacingAndGlyphs" >Color Sync</text>
<path d="M1757.5,143.6 H1920" stroke="#bdbdbd" stroke-width="1"/>
<path d="M1595,143.3 H1757.5" stroke="#4c4d55" stroke-width="1.25"/>
<g fill="none" stroke="#b5b5b5" stroke-width="1.2"><rect x="1621.5" y="153.7" width="19.4" height="16.5"/><rect x="1625.2" y="156.8" width="8.2" height="7.2"/><rect x="1629.2" y="160" width="8.2" height="7.2" fill="#dcdcdc"/></g>
<rect x="1619.8" y="152.0" width="3.4" height="3.4" fill="#dcdcdc" stroke="#b5b5b5" stroke-width="1"/>
<rect x="1639.2" y="152.0" width="3.4" height="3.4" fill="#dcdcdc" stroke="#b5b5b5" stroke-width="1"/>
<rect x="1619.8" y="168.5" width="3.4" height="3.4" fill="#dcdcdc" stroke="#b5b5b5" stroke-width="1"/>
<rect x="1639.2" y="168.5" width="3.4" height="3.4" fill="#dcdcdc" stroke="#b5b5b5" stroke-width="1"/>
<text x="1613.5" y="193.5" font-size="13" fill="#ababab" font-weight="normal" text-anchor="start" textLength="35.8" lengthAdjust="spacingAndGlyphs" >Group</text>
<g fill="none" stroke="#222" stroke-width="1.2"><rect x="1703" y="153.5" width="11.2" height="11.2"/><rect x="1708.6" y="159" width="11.6" height="11.6" fill="#dcdcdc"/></g>
<rect x="1701.7" y="152.2" width="2.6" height="2.6" fill="#dcdcdc" stroke="#222" stroke-width="0.9"/>
<rect x="1712.9" y="152.2" width="2.6" height="2.6" fill="#dcdcdc" stroke="#222" stroke-width="0.9"/>
<rect x="1701.7" y="163.4" width="2.6" height="2.6" fill="#dcdcdc" stroke="#222" stroke-width="0.9"/>
<rect x="1707.3" y="157.7" width="2.6" height="2.6" fill="#dcdcdc" stroke="#222" stroke-width="0.9"/>
<rect x="1718.9" y="157.7" width="2.6" height="2.6" fill="#dcdcdc" stroke="#222" stroke-width="0.9"/>
<rect x="1707.3" y="169.3" width="2.6" height="2.6" fill="#dcdcdc" stroke="#222" stroke-width="0.9"/>
<rect x="1718.9" y="169.3" width="2.6" height="2.6" fill="#dcdcdc" stroke="#222" stroke-width="0.9"/>
<text x="1685.7" y="193.5" font-size="13" fill="#1a1a1a" font-weight="normal" text-anchor="start" textLength="52.0" lengthAdjust="spacingAndGlyphs" >UnGroup</text>
<g fill="#dcdcdc" stroke="#222" stroke-width="1.2"><rect x="1792.8" y="150.6" width="13" height="15.6"/><rect x="1797.6" y="154" width="13" height="15.6"/></g>
<polygon points="1804.1,157.2 1805.3,160.2 1808.5,160.4 1806.0,162.4 1806.8,165.5 1804.1,163.8 1801.4,165.5 1802.2,162.4 1799.7,160.4 1802.9,160.2" fill="none" stroke="#222" stroke-width="1"/>
<text x="1774.3" y="193.5" font-size="13" fill="#1a1a1a" font-weight="normal" text-anchor="start" textLength="55.0" lengthAdjust="spacingAndGlyphs" >Duplicate</text>
<g fill="none" stroke="#222" stroke-width="1.2"><path d="M1875,156.3 H1892 M1880.5,156 V153.6 H1886.5 V156"/><path d="M1876.6,156.5 L1877.6,171.8 H1889.4 L1890.4,156.5"/><path d="M1880.3,159.5 V168.8 M1883.5,159.5 V168.8 M1886.7,159.5 V168.8" stroke-width="1"/></g>
<text x="1865.5" y="193.5" font-size="13" fill="#1a1a1a" font-weight="normal" text-anchor="start" textLength="36.8" lengthAdjust="spacingAndGlyphs" >Delete</text>
<path d="M1595,208.4 H1920" stroke="#bdbdbd" stroke-width="1"/>
<rect x="1899" y="209" width="21" height="697" fill="#f1f1f1"/>
<rect x="1901.4" y="230" width="16" height="618" fill="#c1c1c1"/>
<path d="M1905.2,222.8 H1914.2 L1909.7,218.3 Z" fill="#a3a3a3"/>
<path d="M1905,892.5 H1914.4 L1909.7,897 Z" fill="#505050"/>
<path d="M1608.4,225.9 H1617.6 L1613,230.5 Z" fill="#111"/>
<text x="1630.4" y="233.9" font-size="20" fill="#141414" font-weight="normal" text-anchor="start" textLength="217.0" lengthAdjust="spacingAndGlyphs" >Svg_valentines_truck_...</text><rect x="1595" y="905.8" width="325" height="60.2" fill="#f4f4f4"/>
<rect x="1608.5" y="914.5" width="65" height="44" rx="3" fill="#fff" stroke="#555" stroke-width="1"/>
<text x="1687.1" y="940.1" font-size="13" fill="#222" font-weight="normal" text-anchor="start" textLength="77.0" lengthAdjust="spacingAndGlyphs" >Blank Canvas</text>
<rect x="1595" y="966" width="325" height="60" fill="#dcdcdc"/>
<g fill="none" stroke="#c0c0c0" stroke-width="1.2"><rect x="1613.8" y="974.8" width="11.8" height="11.8"/><circle cx="1626.5" cy="987.5" r="5.8"/><path d="M1620.7,986.6 V980.6 H1625.6"/></g>
<text x="1609.4" y="1015.8" font-size="13" fill="#b4b4b4" font-weight="normal" text-anchor="start" textLength="28.0" lengthAdjust="spacingAndGlyphs" >Slice</text>
<path d="M1670.5,974.8 H1682.8 V980.6 A6.2,6.2 0 1 1 1677.4,987 H1670.5 Z" fill="none" stroke="#222" stroke-width="1.3" stroke-linejoin="round"/>
<text x="1666.1" y="1015.8" font-size="13" fill="#1a1a1a" font-weight="normal" text-anchor="start" textLength="28.4" lengthAdjust="spacingAndGlyphs" stroke="#1a1a1a" stroke-width="0.3">Weld</text>
<g transform="translate(1742.2 984) rotate(140)"><path d="M5.4,9 V-7.2 A4.5,4.5 0 0 0 -3.6,-7.2 V7.6 A2.8,2.8 0 0 0 2,7.6 V-4.6" fill="none" stroke="#1a1a1a" stroke-width="1.6" stroke-linecap="round" transform="translate(-0.9,-0.6)"/></g>
<text x="1723.7" y="1015.8" font-size="13" fill="#1a1a1a" font-weight="normal" text-anchor="start" textLength="37.7" lengthAdjust="spacingAndGlyphs" stroke="#1a1a1a" stroke-width="0.3">Attach</text>
<g fill="none" stroke="#222" stroke-width="1.1" stroke-linejoin="round"><path d="M1809.7,972 V981.5 M1806.7,978.8 L1809.7,981.8 L1812.7,978.8"/><path d="M1805.5,979.2 L1800.3,982 L1809.7,987 L1819.2,982 L1814,979.2"/><path d="M1800.3,986 L1809.7,991.2 L1819.2,986"/></g>
<text x="1790.2" y="1015.8" font-size="13" fill="#1a1a1a" font-weight="normal" text-anchor="start" textLength="39.2" lengthAdjust="spacingAndGlyphs" stroke="#1a1a1a" stroke-width="0.3">Flatten</text>
<rect x="1872.5" y="975.5" width="19" height="18" fill="none" stroke="#c0c0c0" stroke-width="1.1"/><circle cx="1882" cy="984.5" r="5.2" fill="none" stroke="#c0c0c0" stroke-width="1.1" stroke-dasharray="2.6 1.8"/>
<text x="1858.6" y="1015.8" font-size="13" fill="#b4b4b4" font-weight="normal" text-anchor="start" textLength="47.3" lengthAdjust="spacingAndGlyphs" >Contour</text>
</svg>
<svg class="abs" style="left:0;top:0;font-family:'Liberation Sans',sans-serif" width="1920" height="1026" viewBox="0 0 1920 1026">
<rect x="1573" y="208" width="22" height="80.5" fill="#c1c1c1"/>
<rect x="118" y="1010.5" width="80" height="15.5" fill="#c1c1c1"/>
<rect x="134" y="957" width="129" height="43" rx="21.5" fill="#efefef"/>
<text x="158.0" y="990.0" font-size="27" fill="#cfcfcf" font-weight="normal" text-anchor="start" textLength="68.0" lengthAdjust="spacingAndGlyphs" >125%</text>
<circle cx="244.4" cy="979.6" r="11.6" fill="none" stroke="#d2d2d2" stroke-width="1.1"/><path d="M239.4,979.6 H249.4 M244.4,974.6 V984.6" stroke="#cfcfcf" stroke-width="1.2"/>
<polygon points="806.7,170.3 843.3,160.3 835.3,176.7 1089.7,292.5 1083.3,305.8 829.5,189.7 822.5,204.7" fill="#c8371b"/>
<ellipse cx="126.6" cy="918.2" rx="95.6" ry="73.9" fill="#c8371b"/>
<g font-family="Liberation Serif" fill="#fff" font-style="italic" font-weight="bold">
<text x="54" y="915.5" font-size="62" textLength="38" lengthAdjust="spacingAndGlyphs">C</text>
<text x="92.5" y="915.5" font-size="45" textLength="64" lengthAdjust="spacingAndGlyphs">raft</text>
<text x="74" y="962.5" font-size="62" textLength="30" lengthAdjust="spacingAndGlyphs">S</text>
<text x="103" y="962.5" font-size="45" textLength="83" lengthAdjust="spacingAndGlyphs">arah</text>
</g>
<text x="164.2" y="904.2" font-family="Liberation Serif" fill="#fff" font-size="12.5" font-weight="bold" textLength="40" lengthAdjust="spacingAndGlyphs">WITH</text>
<path d="M165.6,913.6 C170,908 178,907.6 186,909.6 C194,911.6 200,911 204.6,906.4 C202,913.4 195,915.6 186,913.2 C178,911 171,911 165.6,913.6 Z" fill="#fff"/>
<path d="M52,886 C50,878 58,872 70,874 M66,972 C54,968 62,948 78,952 M134,936 C138,924 150,926 148,934 C146,940 138,938 140,932 M148,928 C162,918 190,920 196,932 C198,940 188,942 184,936" fill="none" stroke="#fff" stroke-width="1.3" stroke-linecap="round"/>
</svg>
</body>
</html>
